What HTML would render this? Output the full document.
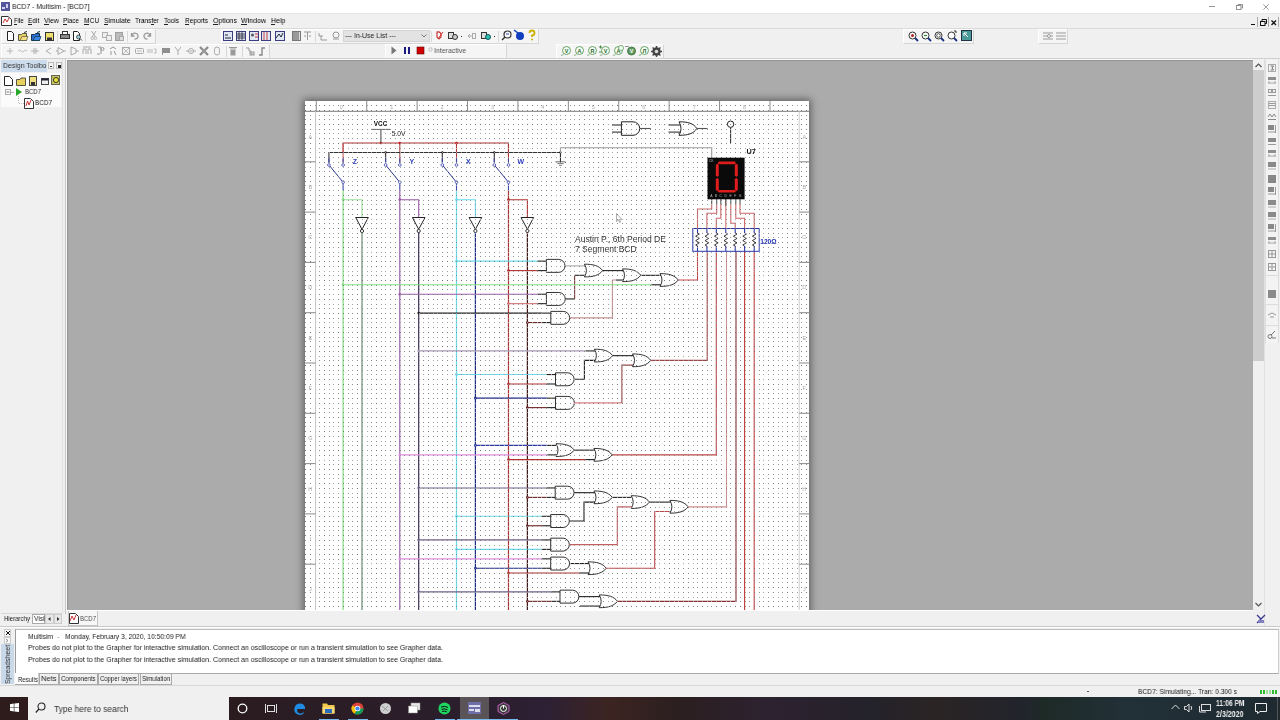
<!DOCTYPE html>
<html><head><meta charset="utf-8"><style>
*{margin:0;padding:0;box-sizing:border-box}
html,body{width:1280px;height:720px;overflow:hidden;background:#f0f0f0;font-family:"Liberation Sans",sans-serif;font-size:8px;color:#000}
.a{position:absolute}
.t{white-space:nowrap;transform-origin:0 50%;will-change:transform}
svg.a{overflow:visible}
</style></head><body>
<div class="a" style="left:0px;top:0px;width:1280px;height:13px;background:#fff"></div>
<div class="a" style="left:0px;top:13px;width:1280px;height:1px;background:#e6e6e6"></div>
<svg class="a" style="left:1px;top:2px;" width="9" height="9" viewBox="0 0 9 9"><rect x="0" y="0" width="9" height="9" fill="#55559a"/><rect x="1" y="5" width="3" height="2" fill="#d0d0f0"/><rect x="5" y="2" width="2" height="4" fill="#d0d0f0"/></svg>
<div class="a t" style="left:12px;top:1.20px;font-size:8px;line-height:12px;color:#1a1a1a;font-weight:normal;transform:scaleX(0.8536);">BCD7 - Multisim - [BCD7]</div>
<div class="a" style="left:1209px;top:6px;width:6px;height:1px;background:#999"></div>
<svg class="a" style="left:1236px;top:4px;" width="7" height="6" viewBox="0 0 7 6"><rect x="0.5" y="1.5" width="4.5" height="4" fill="none" stroke="#888" stroke-width="0.9"/><path d="M2 1.5V0.5H6.5V4H5" fill="none" stroke="#888" stroke-width="0.9"/></svg>
<svg class="a" style="left:1262.5px;top:3.5px;" width="6" height="6" viewBox="0 0 6 6"><path d="M0.3 0.3L5.7 5.7M5.7 0.3L0.3 5.7" stroke="#8a8a8a" stroke-width="0.8"/></svg>
<div class="a" style="left:0px;top:14px;width:1280px;height:14px;background:#f0f0f0"></div>
<div class="a" style="left:0px;top:28px;width:1280px;height:1px;background:#dadada"></div>
<svg class="a" style="left:1px;top:16px;" width="11" height="10" viewBox="0 0 11 10"><path d="M0.5 0.5H7L10.5 3.5V9.5H0.5Z" fill="#fff" stroke="#333"/><path d="M2 7L4 3L6 6L8 2" stroke="#c33" fill="none"/></svg>
<div class="a t" style="left:13.5px;top:15.30px;font-size:8px;line-height:12px;color:#000;font-weight:normal;transform:scaleX(0.7370);">File</div>
<div class="a t" style="left:28px;top:15.30px;font-size:8px;line-height:12px;color:#000;font-weight:normal;transform:scaleX(0.8270);">Edit</div>
<div class="a t" style="left:44px;top:15.30px;font-size:8px;line-height:12px;color:#000;font-weight:normal;transform:scaleX(0.8578);">View</div>
<div class="a t" style="left:63px;top:15.30px;font-size:8px;line-height:12px;color:#000;font-weight:normal;transform:scaleX(0.7996);">Place</div>
<div class="a t" style="left:83.75px;top:15.30px;font-size:8px;line-height:12px;color:#000;font-weight:normal;transform:scaleX(0.8370);">MCU</div>
<div class="a t" style="left:103.5px;top:15.30px;font-size:8px;line-height:12px;color:#000;font-weight:normal;transform:scaleX(0.8514);">Simulate</div>
<div class="a t" style="left:135px;top:15.30px;font-size:8px;line-height:12px;color:#000;font-weight:normal;transform:scaleX(0.8055);">Transfer</div>
<div class="a t" style="left:164px;top:15.30px;font-size:8px;line-height:12px;color:#000;font-weight:normal;transform:scaleX(0.8032);">Tools</div>
<div class="a t" style="left:184.5px;top:15.30px;font-size:8px;line-height:12px;color:#000;font-weight:normal;transform:scaleX(0.8211);">Reports</div>
<div class="a t" style="left:212.5px;top:15.30px;font-size:8px;line-height:12px;color:#000;font-weight:normal;transform:scaleX(0.8706);">Options</div>
<div class="a t" style="left:241px;top:15.30px;font-size:8px;line-height:12px;color:#000;font-weight:normal;transform:scaleX(0.8787);">Window</div>
<div class="a t" style="left:270.5px;top:15.30px;font-size:8px;line-height:12px;color:#000;font-weight:normal;transform:scaleX(0.8813);">Help</div>
<div class="a" style="left:13.7px;top:24.0px;width:3.5px;height:0.9px;background:#222"></div>
<div class="a" style="left:28.2px;top:24.0px;width:3.8000000000000007px;height:0.9px;background:#222"></div>
<div class="a" style="left:44.2px;top:24.0px;width:4.799999999999997px;height:0.9px;background:#222"></div>
<div class="a" style="left:63.2px;top:24.0px;width:4.299999999999997px;height:0.9px;background:#222"></div>
<div class="a" style="left:83.9px;top:24.0px;width:5.599999999999994px;height:0.9px;background:#222"></div>
<div class="a" style="left:103.7px;top:24.0px;width:3.8999999999999915px;height:0.9px;background:#222"></div>
<div class="a" style="left:151px;top:24.0px;width:2.8000000000000114px;height:0.9px;background:#222"></div>
<div class="a" style="left:164.3px;top:24.0px;width:3.8999999999999773px;height:0.9px;background:#222"></div>
<div class="a" style="left:184.6px;top:24.0px;width:4.400000000000006px;height:0.9px;background:#222"></div>
<div class="a" style="left:212.6px;top:24.0px;width:5.0px;height:0.9px;background:#222"></div>
<div class="a" style="left:241.1px;top:24.0px;width:6.400000000000006px;height:0.9px;background:#222"></div>
<div class="a" style="left:270.6px;top:24.0px;width:4.599999999999966px;height:0.9px;background:#222"></div>
<div class="a" style="left:1251px;top:24px;width:4px;height:1.2px;background:#111"></div>
<svg class="a" style="left:1259.5px;top:19px;" width="8" height="7" viewBox="0 0 8 7"><rect x="0.5" y="2.5" width="4.5" height="4" fill="none" stroke="#111"/><path d="M2 2.5V0.5H6.5V4.5H5" fill="none" stroke="#111"/></svg>
<svg class="a" style="left:1271px;top:20px;" width="5.5" height="5.5" viewBox="0 0 5.5 5.5"><path d="M0.5 0.5L5 5M5 0.5L0.5 5" stroke="#111" stroke-width="1.3"/></svg>
<div class="a" style="left:1257px;top:17px;width:1px;height:10px;background:#aaa"></div>
<div class="a" style="left:1268px;top:17px;width:1px;height:10px;background:#aaa"></div>
<div class="a" style="left:1278px;top:17px;width:1px;height:10px;background:#aaa"></div>
<div class="a" style="left:0px;top:29px;width:1280px;height:31px;background:#f0f0f0"></div>
<div class="a" style="left:1px;top:29px;width:155px;height:15px;background:#f5f5f5;border-right:1px solid #d6d6d6;border-bottom:1px solid #d6d6d6;border-left:1px solid #fff;border-top:1px solid #fff"></div>
<div class="a" style="left:221px;top:29px;width:318px;height:15px;background:#f5f5f5;border-right:1px solid #d6d6d6;border-bottom:1px solid #d6d6d6;border-left:1px solid #fff;border-top:1px solid #fff"></div>
<div class="a" style="left:903px;top:29px;width:71px;height:15px;background:#f5f5f5;border-right:1px solid #d6d6d6;border-bottom:1px solid #d6d6d6;border-left:1px solid #fff;border-top:1px solid #fff"></div>
<div class="a" style="left:1038px;top:29px;width:30px;height:15px;background:#f5f5f5;border-right:1px solid #d6d6d6;border-bottom:1px solid #d6d6d6;border-left:1px solid #fff;border-top:1px solid #fff"></div>
<div class="a" style="left:1px;top:44px;width:269px;height:15px;background:#f5f5f5;border-right:1px solid #d6d6d6;border-bottom:1px solid #d6d6d6;border-left:1px solid #fff;border-top:1px solid #fff"></div>
<div class="a" style="left:385px;top:44px;width:122px;height:15px;background:#f5f5f5;border-right:1px solid #d6d6d6;border-bottom:1px solid #d6d6d6;border-left:1px solid #fff;border-top:1px solid #fff"></div>
<div class="a" style="left:556px;top:44px;width:108px;height:15px;background:#f5f5f5;border-right:1px solid #d6d6d6;border-bottom:1px solid #d6d6d6;border-left:1px solid #fff;border-top:1px solid #fff"></div>
<div class="a" style="left:57px;top:31px;width:1px;height:11px;background:#d8d8d8"></div>
<div class="a" style="left:85px;top:31px;width:1px;height:11px;background:#d8d8d8"></div>
<div class="a" style="left:127px;top:31px;width:1px;height:11px;background:#d8d8d8"></div>
<div class="a" style="left:315px;top:31px;width:1px;height:11px;background:#d8d8d8"></div>
<div class="a" style="left:431px;top:31px;width:1px;height:11px;background:#d8d8d8"></div>
<div class="a" style="left:498px;top:31px;width:1px;height:11px;background:#d8d8d8"></div>
<div class="a" style="left:226px;top:46px;width:1px;height:11px;background:#d8d8d8"></div>
<div class="a" style="left:242px;top:46px;width:1px;height:11px;background:#d8d8d8"></div>
<svg class="a" style="left:7px;top:31px;" width="8" height="10" viewBox="0 0 8 10"><path d="M0.5 0.5H4.5L6.5 2.5V9.5H0.5Z" fill="#fff" stroke="#222"/></svg>
<svg class="a" style="left:18px;top:31px;" width="11" height="10" viewBox="0 0 11 10"><path d="M0.5 3.5H3.5L4.5 2.5H8.5V9.5H0.5Z" fill="#e8d060" stroke="#554"/><path d="M2 9.5L4 5.5H10L8.5 9.5Z" fill="#f4e080" stroke="#554" stroke-width="0.7"/><path d="M6 1.5L9 0.5" stroke="#333"/></svg>
<svg class="a" style="left:31px;top:31px;" width="11" height="10" viewBox="0 0 11 10"><path d="M0.5 3.5H3.5L4.5 2.5H8.5V9.5H0.5Z" fill="#2a6fd0" stroke="#134"/><path d="M2 9.5L4 5.5H10L8.5 9.5Z" fill="#3a86e8" stroke="#134" stroke-width="0.7"/><path d="M6 1.5L9 0.5" stroke="#134"/></svg>
<svg class="a" style="left:45px;top:32px;" width="9" height="9" viewBox="0 0 9 9"><rect x="0.5" y="0.5" width="8" height="8" fill="#f0e070" stroke="#333"/><rect x="2" y="5.5" width="5" height="3" fill="#333"/></svg>
<svg class="a" style="left:60px;top:31px;" width="10" height="9" viewBox="0 0 10 9"><rect x="0.5" y="3.5" width="9" height="4" fill="#888" stroke="#333"/><rect x="2.5" y="0.5" width="5" height="3" fill="#fff" stroke="#333"/></svg>
<svg class="a" style="left:73px;top:31px;" width="10" height="10" viewBox="0 0 10 10"><path d="M0.5 0.5H4.5L6.5 2.5V9.5H0.5Z" fill="#fff" stroke="#222"/><circle cx="5.5" cy="6" r="2" fill="#9cd" stroke="#333" stroke-width="0.8"/><path d="M7 7.5L9 9.5" stroke="#333"/></svg>
<svg class="a" style="left:91px;top:31px;" width="6" height="9" viewBox="0 0 6 9"><path d="M0.5 0L4.5 6M5 0L1 6" stroke="#aaa"/><circle cx="1.3" cy="7.3" r="1.3" fill="none" stroke="#aaa" stroke-width="0.8"/><circle cx="4.5" cy="7.3" r="1.3" fill="none" stroke="#aaa" stroke-width="0.8"/></svg>
<svg class="a" style="left:102px;top:32px;" width="10" height="9" viewBox="0 0 10 9"><rect x="0.5" y="0.5" width="5" height="5" fill="#eee" stroke="#b0b0b0"/><rect x="4.5" y="3.5" width="5" height="5" fill="#eee" stroke="#b0b0b0"/></svg>
<svg class="a" style="left:115px;top:31px;" width="9" height="10" viewBox="0 0 9 10"><rect x="0.5" y="1.5" width="7" height="8" fill="#bbb" stroke="#a0a0a0"/><rect x="4.5" y="5.5" width="4" height="4" fill="#ddd" stroke="#aaa"/></svg>
<svg class="a" style="left:130px;top:32px;" width="8" height="8" viewBox="0 0 8 8"><path d="M1.5 1V4H4.5" fill="none" stroke="#999" stroke-width="1.3"/><path d="M2 4A3 3 0 1 1 4.5 7" fill="none" stroke="#999" stroke-width="1.3"/></svg>
<svg class="a" style="left:144px;top:32px;" width="8" height="8" viewBox="0 0 8 8"><path d="M6.5 1V4H3.5" fill="none" stroke="#999" stroke-width="1.3"/><path d="M6 4A3 3 0 1 0 3.5 7" fill="none" stroke="#999" stroke-width="1.3"/></svg>
<svg class="a" style="left:223px;top:31px;" width="10" height="10" viewBox="0 0 10 10"><rect x="0.5" y="0.5" width="9" height="9" fill="#dfe6f4" stroke="#3c3c80"/><path d="M2 7H8M2 4H5" stroke="#223" /></svg>
<svg class="a" style="left:236px;top:31px;" width="10" height="10" viewBox="0 0 10 10"><rect x="0.5" y="0.5" width="9" height="9" fill="#dfe6f4" stroke="#3c3c80"/><path d="M1 3H9M1 5H9M1 7H9M3 1V9M6 1V9" stroke="#223" stroke-width="0.8"/></svg>
<svg class="a" style="left:249px;top:31px;" width="10" height="10" viewBox="0 0 10 10"><rect x="0.5" y="0.5" width="9" height="9" fill="#dfe6f4" stroke="#3c3c80"/><circle cx="3.5" cy="4" r="1.5" fill="#555"/><path d="M6 3H9M6 6H9" stroke="#c33"/></svg>
<svg class="a" style="left:261px;top:31px;" width="10" height="10" viewBox="0 0 10 10"><rect x="0.5" y="0.5" width="9" height="9" fill="#dfe6f4" stroke="#3c3c80"/><path d="M3 1V9M6 1V9" stroke="#c44"/></svg>
<svg class="a" style="left:275px;top:31px;" width="10" height="10" viewBox="0 0 10 10"><rect x="0.5" y="0.5" width="9" height="9" fill="#dfe6f4" stroke="#3c3c80"/><path d="M1 7L4 3L6 6L8 2" stroke="#223" fill="none"/></svg>
<svg class="a" style="left:292px;top:31px;" width="9" height="10" viewBox="0 0 9 10"><rect x="0.5" y="0.5" width="8" height="9" fill="#ddd" stroke="#777"/><path d="M2 1V9M4 1V9M6 1V9" stroke="#555"/></svg>
<svg class="a" style="left:303px;top:31px;" width="9" height="10" viewBox="0 0 9 10"><path d="M1 1H8M4.5 1V9M1 5H3M6 5H8" stroke="#999"/></svg>
<svg class="a" style="left:318px;top:32px;" width="10" height="9" viewBox="0 0 10 9"><path d="M1 1V4H5M3 4V8H9" fill="none" stroke="#999"/></svg>
<svg class="a" style="left:331px;top:31px;" width="10" height="10" viewBox="0 0 10 10"><circle cx="5" cy="4" r="3" fill="none" stroke="#999"/><path d="M2 8H8" stroke="#999"/></svg>
<div class="a" style="left:343px;top:30px;width:87px;height:12px;background:#e3e3e3;border:1px solid #d4d4d4"></div>
<div class="a t" style="left:345px;top:30.00px;font-size:8px;line-height:12px;color:#222;font-weight:normal;transform:scaleX(0.8694);">--- In-Use List ---</div>
<svg class="a" style="left:421px;top:34px;" width="6" height="4" viewBox="0 0 6 4"><path d="M0.5 0.5L3 3L5.5 0.5" fill="none" stroke="#777"/></svg>
<svg class="a" style="left:434px;top:31px;" width="10" height="10" viewBox="0 0 10 10"><path d="M3 1A3 3 0 0 1 7 3V6L5 8L3 6Z" fill="none" stroke="#c33" stroke-width="1.2"/><path d="M4 8L9 1" stroke="#c33"/></svg>
<svg class="a" style="left:448px;top:31px;" width="10" height="10" viewBox="0 0 10 10"><rect x="0.5" y="1.5" width="5" height="6" fill="#ddd" stroke="#333"/><circle cx="7" cy="6" r="2.5" fill="#ccc" stroke="#333"/></svg>
<div class="a" style="left:461px;top:36px;width:1px;height:1px;background:#333"></div>
<svg class="a" style="left:467px;top:32px;" width="9" height="8" viewBox="0 0 9 8"><path d="M1 4H5M3 2L1 4L3 6" stroke="#aaa" fill="none"/><rect x="5.5" y="1.5" width="3" height="5" fill="none" stroke="#aaa"/></svg>
<svg class="a" style="left:481px;top:31px;" width="10" height="10" viewBox="0 0 10 10"><rect x="0.5" y="1.5" width="5" height="6" fill="#ddd" stroke="#333"/><circle cx="7" cy="6" r="2.5" fill="#2ac0b0" stroke="#155"/></svg>
<div class="a" style="left:494px;top:36px;width:1px;height:1px;background:#333"></div>
<svg class="a" style="left:501px;top:30px;" width="11" height="11" viewBox="0 0 11 11"><circle cx="6.5" cy="4.5" r="3.5" fill="#fff" stroke="#333" stroke-width="1.2"/><path d="M4 7L1 10" stroke="#333" stroke-width="1.5"/><path d="M5 4H8" stroke="#24a"/></svg>
<svg class="a" style="left:514px;top:30px;" width="11" height="11" viewBox="0 0 11 11"><circle cx="6" cy="6" r="4" fill="#1040c0"/><path d="M0 0L4 3" stroke="#1040c0" stroke-width="1.5"/></svg>
<svg class="a" style="left:528px;top:30px;" width="8" height="11" viewBox="0 0 8 11"><path d="M1.5 3A2.5 2.5 0 1 1 4 5.5V7" fill="none" stroke="#c9b000" stroke-width="1.8"/><circle cx="4" cy="9.5" r="1" fill="#c9b000"/></svg>
<svg class="a" style="left:908px;top:31px;" width="11" height="11" viewBox="0 0 11 11"><circle cx="4.5" cy="4.5" r="3.5" fill="#fff" stroke="#333"/><path d="M7 7L10 10" stroke="#1a2f80" stroke-width="1.8"/><circle cx="4.5" cy="4.5" r="1.5" fill="#b02020"/></svg>
<svg class="a" style="left:921px;top:31px;" width="11" height="11" viewBox="0 0 11 11"><circle cx="4.5" cy="4.5" r="3.5" fill="#fff" stroke="#333"/><path d="M7 7L10 10" stroke="#1a2f80" stroke-width="1.8"/><path d="M3 4.5H6" stroke="#2a8a2a" stroke-width="1.2"/></svg>
<svg class="a" style="left:934px;top:31px;" width="11" height="11" viewBox="0 0 11 11"><circle cx="4.5" cy="4.5" r="3.5" fill="#fff" stroke="#333"/><path d="M7 7L10 10" stroke="#1a2f80" stroke-width="1.8"/><circle cx="4.5" cy="4.5" r="1.8" fill="none" stroke="#555"/></svg>
<svg class="a" style="left:947px;top:31px;" width="11" height="11" viewBox="0 0 11 11"><circle cx="4.5" cy="4.5" r="3.5" fill="#fff" stroke="#333"/><path d="M7 7L10 10" stroke="#1a2f80" stroke-width="1.8"/><path d="M7 0L9 0L9 2" stroke="#333" fill="none"/></svg>
<svg class="a" style="left:961px;top:30px;" width="11" height="11" viewBox="0 0 11 11"><rect x="0.5" y="0.5" width="10" height="10" fill="#4a9a9a" stroke="#234"/><path d="M3 3L7 7M3 3H6M3 3V6" stroke="#fff" fill="none"/></svg>
<svg class="a" style="left:1043px;top:31px;" width="10" height="10" viewBox="0 0 10 10"><path d="M0 2H10M0 5H10M0 8H10" stroke="#999"/><circle cx="6" cy="5" r="1.5" fill="#fff" stroke="#999"/></svg>
<svg class="a" style="left:1056px;top:31px;" width="10" height="10" viewBox="0 0 10 10"><path d="M0 2H10M0 5H10M0 8H10" stroke="#999"/></svg>
<svg class="a" style="left:5px;top:46px;" width="10" height="10" viewBox="0 0 10 10"><path d="M5 2V8M2 5H8" stroke="#b8b8b8"/></svg>
<svg class="a" style="left:17px;top:46px;" width="10" height="10" viewBox="0 0 10 10"><path d="M1 5Q2.5 3 4 5T7 5T10 5" stroke="#bbb" fill="none"/></svg>
<svg class="a" style="left:30px;top:46px;" width="10" height="10" viewBox="0 0 10 10"><path d="M1 5H9M4 2V8M6 2V8" stroke="#b0b0b0"/></svg>
<svg class="a" style="left:43px;top:46px;" width="10" height="10" viewBox="0 0 10 10"><path d="M8 2L3 5L8 8" stroke="#b0b0b0" fill="none"/></svg>
<svg class="a" style="left:56px;top:46px;" width="10" height="10" viewBox="0 0 10 10"><path d="M2 1.5L8 5L2 8.5Z" fill="none" stroke="#aaa"/><path d="M0 5H2M8 5H10" stroke="#aaa"/></svg>
<svg class="a" style="left:69px;top:46px;" width="10" height="10" viewBox="0 0 10 10"><path d="M2 1L7 3V7L2 9Z" fill="none" stroke="#aaa"/><path d="M7 5H10" stroke="#aaa"/></svg>
<svg class="a" style="left:82px;top:46px;" width="10" height="10" viewBox="0 0 10 10"><path d="M1 8V3H4V8M6 8V3H9V8M1 1H9" stroke="#aaa" fill="none"/></svg>
<svg class="a" style="left:95px;top:46px;" width="10" height="10" viewBox="0 0 10 10"><path d="M3 1H6V8M2 8H5" stroke="#999" fill="none"/><circle cx="7.5" cy="3" r="1.5" fill="none" stroke="#999"/></svg>
<svg class="a" style="left:108px;top:46px;" width="10" height="10" viewBox="0 0 10 10"><path d="M2 3L5 1L8 3M3 5V9M6 5L8 9" stroke="#999" fill="none"/></svg>
<svg class="a" style="left:121px;top:46px;" width="10" height="10" viewBox="0 0 10 10"><rect x="1.5" y="1.5" width="7" height="7" fill="none" stroke="#aaa"/><path d="M2 2L8 8M8 2L2 8" stroke="#bbb"/></svg>
<svg class="a" style="left:134px;top:46px;" width="10" height="10" viewBox="0 0 10 10"><rect x="1.5" y="2.5" width="8" height="5" rx="1" fill="none" stroke="#aaa"/><path d="M3 5H8" stroke="#bbb"/></svg>
<svg class="a" style="left:147px;top:46px;" width="10" height="10" viewBox="0 0 10 10"><path d="M1 3V7M3 3V7M5 3V7M7 3H9V7H7" stroke="#bbb" fill="none"/></svg>
<svg class="a" style="left:161px;top:46px;" width="10" height="10" viewBox="0 0 10 10"><rect x="1" y="2" width="8" height="5" fill="#8f8f8f"/><path d="M1.5 7V9" stroke="#999"/></svg>
<svg class="a" style="left:173px;top:46px;" width="10" height="10" viewBox="0 0 10 10"><path d="M2 1L5 5L8 1M5 5V9" stroke="#aaa" fill="none"/></svg>
<svg class="a" style="left:186px;top:46px;" width="10" height="10" viewBox="0 0 10 10"><circle cx="5" cy="5" r="2.5" fill="none" stroke="#aaa"/><path d="M0 5H2.5M7.5 5H10M3.5 5H6.5" stroke="#aaa"/></svg>
<svg class="a" style="left:199px;top:46px;" width="10" height="10" viewBox="0 0 10 10"><path d="M1 1L9 9M9 1L1 9" stroke="#8a8a8a" stroke-width="2.2"/><rect x="3" y="3" width="4" height="4" fill="#999"/></svg>
<svg class="a" style="left:212px;top:46px;" width="10" height="10" viewBox="0 0 10 10"><rect x="2.5" y="1" width="5" height="8" rx="2.5" fill="none" stroke="#aaa"/></svg>
<svg class="a" style="left:228px;top:46px;" width="10" height="10" viewBox="0 0 10 10"><path d="M1 1.5H9M2 3H8" stroke="#999"/><rect x="2.5" y="4" width="5" height="5.5" fill="#9a9a9a"/></svg>
<svg class="a" style="left:245px;top:46px;" width="10" height="10" viewBox="0 0 10 10"><path d="M1 2H4V5H6M6 5V8H9" stroke="#999" fill="none"/><rect x="5" y="6" width="4" height="3" fill="none" stroke="#999"/></svg>
<svg class="a" style="left:257px;top:46px;" width="10" height="10" viewBox="0 0 10 10"><path d="M2 9H5V2H8" stroke="#888" stroke-width="1.4" fill="none"/></svg>
<svg class="a" style="left:391px;top:46px;" width="6" height="9" viewBox="0 0 6 9"><path d="M0.5 0.5L5.5 4.5L0.5 8.5Z" fill="#777"/></svg>
<svg class="a" style="left:404px;top:47px;" width="6" height="7" viewBox="0 0 6 7"><rect x="0" y="0" width="2" height="7" fill="#1a1a80"/><rect x="4" y="0" width="2" height="7" fill="#1a1a80"/></svg>
<svg class="a" style="left:417px;top:47px;" width="7" height="7" viewBox="0 0 7 7"><rect x="0" y="0" width="7" height="7" fill="#d00000" stroke="#600" stroke-width="0.6"/></svg>
<svg class="a" style="left:428px;top:47px;" width="5" height="5" viewBox="0 0 5 5"><circle cx="2.5" cy="2.5" r="1.7" fill="none" stroke="#bbb"/></svg>
<div class="a t" style="left:433.5px;top:44.80px;font-size:8px;line-height:12px;color:#555;font-weight:normal;transform:scaleX(0.8698);">Interactive</div>
<svg class="a" style="left:560px;top:45px;" width="12" height="12" viewBox="0 0 12 12"><path d="M1 10.5L3.5 9.5" stroke="#9aba9a" stroke-width="1.2"/><circle cx="6.5" cy="5.5" r="4" fill="#f4fff4" stroke="#5c9a5c" stroke-width="0.9"/><text x="6.5" y="7.7" font-size="5.5" text-anchor="middle" fill="#2f5f2f" font-family="Liberation Sans" font-weight="bold">V</text></svg>
<svg class="a" style="left:573px;top:45px;" width="12" height="12" viewBox="0 0 12 12"><path d="M1 10.5L3.5 9.5" stroke="#9aba9a" stroke-width="1.2"/><circle cx="6.5" cy="5.5" r="4" fill="#f4fff4" stroke="#5c9a5c" stroke-width="0.9"/><text x="6.5" y="7.7" font-size="5.5" text-anchor="middle" fill="#2f5f2f" font-family="Liberation Sans" font-weight="bold">A</text></svg>
<svg class="a" style="left:586px;top:45px;" width="12" height="12" viewBox="0 0 12 12"><path d="M1 10.5L3.5 9.5" stroke="#9aba9a" stroke-width="1.2"/><circle cx="6.5" cy="5.5" r="4" fill="#f4fff4" stroke="#5c9a5c" stroke-width="0.9"/><text x="6.5" y="7.7" font-size="5.5" text-anchor="middle" fill="#2f5f2f" font-family="Liberation Sans" font-weight="bold">R</text></svg>
<svg class="a" style="left:599px;top:45px;" width="12" height="12" viewBox="0 0 12 12"><path d="M1 10.5L3.5 9.5" stroke="#9aba9a" stroke-width="1.2"/><circle cx="6.5" cy="5.5" r="4" fill="#f4fff4" stroke="#5c9a5c" stroke-width="0.9"/><text x="6.5" y="7.7" font-size="5.5" text-anchor="middle" fill="#2f5f2f" font-family="Liberation Sans" font-weight="bold">V</text><path d="M0 2H3M1.5 0.5V3.5M0 7H3" stroke="#4a8a4a"/></svg>
<svg class="a" style="left:612px;top:45px;" width="12" height="12" viewBox="0 0 12 12"><path d="M1 10.5L3.5 9.5" stroke="#9aba9a" stroke-width="1.2"/><circle cx="6.5" cy="5.5" r="4" fill="#f4fff4" stroke="#5c9a5c" stroke-width="0.9"/><text x="6.5" y="7.7" font-size="5.5" text-anchor="middle" fill="#2f5f2f" font-family="Liberation Sans" font-weight="bold">A</text><circle cx="9" cy="3" r="2.5" fill="#f4fff4" stroke="#5c9a5c" stroke-width="0.8"/></svg>
<svg class="a" style="left:625px;top:45px;" width="12" height="12" viewBox="0 0 12 12"><path d="M0 1.5H4" stroke="#9a9a9a"/><circle cx="6.5" cy="6" r="4" fill="#5f9a5f" stroke="#3c6c3c" stroke-width="0.8"/><text x="6.5" y="8.2" font-size="5.5" text-anchor="middle" fill="#fff" font-family="Liberation Sans" font-weight="bold">V</text></svg>
<svg class="a" style="left:638px;top:45px;" width="12" height="12" viewBox="0 0 12 12"><path d="M1 10.5L3.5 9.5" stroke="#9aba9a" stroke-width="1.2"/><circle cx="6.5" cy="5.5" r="4" fill="#f4fff4" stroke="#5c9a5c" stroke-width="0.9"/><text x="6.5" y="7.7" font-size="5.5" text-anchor="middle" fill="#2f5f2f" font-family="Liberation Sans" font-weight="bold">Л</text></svg>
<svg class="a" style="left:651px;top:46px;" width="11" height="11" viewBox="0 0 11 11"><circle cx="5.5" cy="5.5" r="4.2" fill="#444"/><path d="M5.5 0V11M0 5.5H11M1.6 1.6L9.4 9.4M9.4 1.6L1.6 9.4" stroke="#444" stroke-width="1.4"/><circle cx="5.5" cy="5.5" r="1.8" fill="#ddd"/></svg>
<div class="a" style="left:0px;top:59px;width:62px;height:568px;background:#f0f0f0"></div>
<div class="a" style="left:62px;top:59px;width:1px;height:555px;background:#e2e2e2"></div>
<div class="a" style="left:1px;top:60px;width:46px;height:12px;background:#cddcec"></div>
<div class="a t" style="left:2.5px;top:59.80px;font-size:8px;line-height:12px;color:#333;font-weight:normal;transform:scaleX(0.8605);">Design Toolbo</div>
<div class="a" style="left:48px;top:62px;width:6px;height:7px;background:#f4f4f4;border:1px solid #bbb"></div>
<div class="a" style="left:50px;top:66px;width:2px;height:1px;background:#333"></div>
<div class="a" style="left:55.5px;top:62px;width:6.5px;height:7px;background:#f4f4f4;border:1px solid #bbb"></div>
<div class="a" style="left:57.5px;top:64.5px;width:3px;height:3px;background:#222"></div>
<div class="a" style="left:1px;top:73px;width:60px;height:34px;background:#fbfbfb"></div>
<svg class="a" style="left:4px;top:76px;" width="9" height="10" viewBox="0 0 9 10"><path d="M0.5 0.5H5.5L8.5 3.5V9.5H0.5Z" fill="#fff" stroke="#222"/></svg>
<svg class="a" style="left:16px;top:76px;" width="10" height="10" viewBox="0 0 10 10"><path d="M0.5 3.5H4L5 2H9.5V9.5H0.5Z" fill="#e8d060" stroke="#554"/></svg>
<svg class="a" style="left:29px;top:76px;" width="8" height="10" viewBox="0 0 8 10"><rect x="0.5" y="0.5" width="7" height="9" fill="#f0e080" stroke="#444"/><rect x="2" y="6" width="4" height="3" fill="#333"/></svg>
<svg class="a" style="left:41px;top:77px;" width="8" height="8" viewBox="0 0 8 8"><rect x="0.5" y="1.5" width="7" height="6" fill="#eee" stroke="#444"/><rect x="0.5" y="1.5" width="7" height="2" fill="#223"/></svg>
<svg class="a" style="left:51px;top:75px;" width="9" height="10" viewBox="0 0 9 10"><rect x="0.5" y="0.5" width="8" height="9" fill="#c8c060" stroke="#665"/><circle cx="5" cy="5" r="2.5" fill="#ee3" stroke="#333"/></svg>
<svg class="a" style="left:5px;top:89px;" width="6" height="6" viewBox="0 0 6 6"><rect x="0.5" y="0.5" width="5" height="5" fill="#fff" stroke="#aaa"/><path d="M1.5 3H4.5" stroke="#777"/></svg>
<div class="a" style="left:11px;top:92px;width:3px;height:1px;background:#bbb"></div>
<svg class="a" style="left:16px;top:88px;" width="6" height="8" viewBox="0 0 6 8"><path d="M0 0L6 4L0 8Z" fill="#2aa52a"/></svg>
<div class="a t" style="left:25px;top:86.00px;font-size:8px;line-height:12px;color:#333;font-weight:normal;transform:scaleX(0.7498);">BCD7</div>
<svg class="a" style="left:18px;top:96px;" width="6" height="8" viewBox="0 0 6 8"><path d="M0.5 0V7.5H6" fill="none" stroke="#bbb" stroke-dasharray="1 1"/></svg>
<svg class="a" style="left:24px;top:98px;" width="10" height="11" viewBox="0 0 10 11"><path d="M0.5 0.5H6.5L9.5 3.5V10.5H0.5Z" fill="#fff" stroke="#333"/><path d="M2 8L3.5 3L5 7L7 2" stroke="#c33" fill="none"/></svg>
<div class="a t" style="left:35px;top:97.00px;font-size:8px;line-height:12px;color:#222;font-weight:normal;transform:scaleX(0.7966);">BCD7</div>
<div class="a" style="left:1px;top:613px;width:61px;height:1px;background:#d8d8d8"></div>
<div class="a t" style="left:4px;top:613.30px;font-size:8px;line-height:12px;color:#222;font-weight:normal;transform:scaleX(0.7596);">Hierarchy</div>
<div class="a" style="left:32px;top:614px;width:13px;height:10px;background:#fff;border:1px solid #aaa"></div>
<div class="a t" style="left:33.5px;top:613.00px;font-size:8px;line-height:12px;color:#222;font-weight:normal;transform:scaleX(0.8238);">Visi</div>
<div class="a" style="left:45px;top:614px;width:9px;height:10px;background:#e8e8e8;border:1px solid #ccc"></div>
<div class="a" style="left:54px;top:614px;width:8px;height:10px;background:#e8e8e8;border:1px solid #ccc"></div>
<svg class="a" style="left:48px;top:617px;" width="3" height="4" viewBox="0 0 3 4"><path d="M2.5 0L0 2L2.5 4Z" fill="#333"/></svg>
<svg class="a" style="left:56.5px;top:617px;" width="3" height="4" viewBox="0 0 3 4"><path d="M0 0L2.5 2L0 4Z" fill="#333"/></svg>
<div class="a" style="left:63px;top:58px;width:3px;height:556px;background:#f0f0f0"></div>
<div class="a" style="left:65px;top:58px;width:1px;height:556px;background:#c8c8c8"></div>
<div class="a" style="left:0px;top:58px;width:1280px;height:1px;background:#cfcfcf"></div>
<div class="a" style="left:66px;top:59px;width:1187px;height:551px;background:#fafafa"></div>
<div class="a" style="left:67px;top:60px;width:1186px;height:550px;background:#ababab;border-left:1px solid #959595;border-top:1px solid #959595"></div>
<div class="a" style="left:67px;top:60px;width:1186px;height:550px;overflow:hidden">
<div class="a" style="left:238px;top:41px;width:504px;height:560px;background:#fff;box-shadow:0 0 7px 2px rgba(40,40,40,0.55)"></div>
<svg class="a" style="left:-67px;top:-60px;will-change:transform" width="1280" height="720" viewBox="0 0 1280 720"><defs><pattern id="gp" x="305" y="100" width="189" height="189" patternUnits="userSpaceOnUse"><path d="M0 5h1v1h-1zM0 10h1v1h-1zM0 24h1v1h-1zM0 43h1v1h-1zM0 57h1v1h-1zM0 76h1v1h-1zM0 95h1v1h-1zM0 109h1v1h-1zM0 128h1v1h-1zM0 142h1v1h-1zM0 147h1v1h-1zM0 161h1v1h-1zM0 180h1v1h-1zM5 24h1v1h-1zM5 43h1v1h-1zM5 76h1v1h-1zM5 109h1v1h-1zM5 128h1v1h-1zM5 161h1v1h-1zM5 180h1v1h-1zM19 5h1v1h-1zM19 10h1v1h-1zM19 24h1v1h-1zM19 38h1v1h-1zM19 43h1v1h-1zM19 57h1v1h-1zM19 62h1v1h-1zM19 76h1v1h-1zM19 90h1v1h-1zM19 95h1v1h-1zM19 109h1v1h-1zM19 114h1v1h-1zM19 128h1v1h-1zM19 142h1v1h-1zM19 147h1v1h-1zM19 161h1v1h-1zM19 166h1v1h-1zM19 175h1v1h-1zM19 180h1v1h-1zM33 24h1v1h-1zM33 43h1v1h-1zM33 76h1v1h-1zM33 109h1v1h-1zM33 128h1v1h-1zM33 161h1v1h-1zM33 180h1v1h-1zM38 5h1v1h-1zM38 10h1v1h-1zM38 24h1v1h-1zM38 43h1v1h-1zM38 57h1v1h-1zM38 76h1v1h-1zM38 95h1v1h-1zM38 109h1v1h-1zM38 128h1v1h-1zM38 142h1v1h-1zM38 147h1v1h-1zM38 161h1v1h-1zM38 180h1v1h-1zM52 5h1v1h-1zM52 10h1v1h-1zM52 24h1v1h-1zM52 43h1v1h-1zM52 57h1v1h-1zM52 62h1v1h-1zM52 76h1v1h-1zM52 90h1v1h-1zM52 95h1v1h-1zM52 109h1v1h-1zM52 128h1v1h-1zM52 142h1v1h-1zM52 147h1v1h-1zM52 161h1v1h-1zM52 180h1v1h-1zM57 24h1v1h-1zM57 76h1v1h-1zM57 128h1v1h-1zM57 161h1v1h-1zM57 180h1v1h-1zM71 5h1v1h-1zM71 10h1v1h-1zM71 24h1v1h-1zM71 38h1v1h-1zM71 43h1v1h-1zM71 57h1v1h-1zM71 62h1v1h-1zM71 76h1v1h-1zM71 90h1v1h-1zM71 95h1v1h-1zM71 109h1v1h-1zM71 114h1v1h-1zM71 128h1v1h-1zM71 142h1v1h-1zM71 147h1v1h-1zM71 161h1v1h-1zM71 166h1v1h-1zM71 175h1v1h-1zM71 180h1v1h-1zM85 24h1v1h-1zM85 43h1v1h-1zM85 57h1v1h-1zM85 76h1v1h-1zM85 95h1v1h-1zM85 109h1v1h-1zM85 128h1v1h-1zM85 161h1v1h-1zM85 180h1v1h-1zM90 5h1v1h-1zM90 24h1v1h-1zM90 43h1v1h-1zM90 57h1v1h-1zM90 76h1v1h-1zM90 95h1v1h-1zM90 109h1v1h-1zM90 128h1v1h-1zM90 147h1v1h-1zM90 161h1v1h-1zM90 180h1v1h-1zM104 5h1v1h-1zM104 10h1v1h-1zM104 24h1v1h-1zM104 38h1v1h-1zM104 43h1v1h-1zM104 57h1v1h-1zM104 62h1v1h-1zM104 76h1v1h-1zM104 90h1v1h-1zM104 95h1v1h-1zM104 109h1v1h-1zM104 114h1v1h-1zM104 128h1v1h-1zM104 142h1v1h-1zM104 147h1v1h-1zM104 161h1v1h-1zM104 180h1v1h-1zM109 24h1v1h-1zM109 76h1v1h-1zM109 128h1v1h-1zM118 24h1v1h-1zM118 76h1v1h-1zM118 128h1v1h-1zM123 5h1v1h-1zM123 10h1v1h-1zM123 24h1v1h-1zM123 38h1v1h-1zM123 43h1v1h-1zM123 57h1v1h-1zM123 62h1v1h-1zM123 76h1v1h-1zM123 90h1v1h-1zM123 95h1v1h-1zM123 109h1v1h-1zM123 114h1v1h-1zM123 128h1v1h-1zM123 142h1v1h-1zM123 147h1v1h-1zM123 161h1v1h-1zM123 180h1v1h-1zM137 5h1v1h-1zM137 24h1v1h-1zM137 43h1v1h-1zM137 57h1v1h-1zM137 76h1v1h-1zM137 95h1v1h-1zM137 109h1v1h-1zM137 128h1v1h-1zM137 147h1v1h-1zM137 161h1v1h-1zM137 180h1v1h-1zM142 24h1v1h-1zM142 43h1v1h-1zM142 57h1v1h-1zM142 76h1v1h-1zM142 95h1v1h-1zM142 109h1v1h-1zM142 128h1v1h-1zM142 161h1v1h-1zM142 180h1v1h-1zM156 5h1v1h-1zM156 10h1v1h-1zM156 24h1v1h-1zM156 38h1v1h-1zM156 43h1v1h-1zM156 57h1v1h-1zM156 62h1v1h-1zM156 76h1v1h-1zM156 90h1v1h-1zM156 95h1v1h-1zM156 109h1v1h-1zM156 114h1v1h-1zM156 128h1v1h-1zM156 142h1v1h-1zM156 147h1v1h-1zM156 161h1v1h-1zM156 166h1v1h-1zM156 175h1v1h-1zM156 180h1v1h-1zM170 24h1v1h-1zM170 76h1v1h-1zM170 128h1v1h-1zM170 161h1v1h-1zM170 180h1v1h-1zM175 5h1v1h-1zM175 10h1v1h-1zM175 24h1v1h-1zM175 43h1v1h-1zM175 57h1v1h-1zM175 62h1v1h-1zM175 76h1v1h-1zM175 90h1v1h-1zM175 95h1v1h-1zM175 109h1v1h-1zM175 128h1v1h-1zM175 142h1v1h-1zM175 147h1v1h-1zM175 161h1v1h-1zM175 180h1v1h-1z" fill="#747474"/><path d="M0 0h1v1h-1zM0 15h1v1h-1zM0 19h1v1h-1zM0 29h1v1h-1zM0 38h1v1h-1zM0 48h1v1h-1zM0 52h1v1h-1zM0 62h1v1h-1zM0 71h1v1h-1zM0 81h1v1h-1zM0 90h1v1h-1zM0 100h1v1h-1zM0 104h1v1h-1zM0 114h1v1h-1zM0 123h1v1h-1zM0 133h1v1h-1zM0 137h1v1h-1zM0 152h1v1h-1zM0 156h1v1h-1zM0 166h1v1h-1zM0 175h1v1h-1zM0 185h1v1h-1zM5 5h1v1h-1zM5 10h1v1h-1zM5 19h1v1h-1zM5 29h1v1h-1zM5 38h1v1h-1zM5 48h1v1h-1zM5 52h1v1h-1zM5 57h1v1h-1zM5 62h1v1h-1zM5 71h1v1h-1zM5 81h1v1h-1zM5 90h1v1h-1zM5 95h1v1h-1zM5 100h1v1h-1zM5 104h1v1h-1zM5 114h1v1h-1zM5 123h1v1h-1zM5 133h1v1h-1zM5 142h1v1h-1zM5 147h1v1h-1zM5 156h1v1h-1zM5 166h1v1h-1zM5 175h1v1h-1zM5 185h1v1h-1zM10 24h1v1h-1zM10 43h1v1h-1zM10 76h1v1h-1zM10 109h1v1h-1zM10 128h1v1h-1zM10 161h1v1h-1zM10 180h1v1h-1zM14 5h1v1h-1zM14 10h1v1h-1zM14 19h1v1h-1zM14 24h1v1h-1zM14 29h1v1h-1zM14 38h1v1h-1zM14 43h1v1h-1zM14 57h1v1h-1zM14 62h1v1h-1zM14 71h1v1h-1zM14 76h1v1h-1zM14 81h1v1h-1zM14 90h1v1h-1zM14 95h1v1h-1zM14 109h1v1h-1zM14 114h1v1h-1zM14 123h1v1h-1zM14 128h1v1h-1zM14 133h1v1h-1zM14 142h1v1h-1zM14 147h1v1h-1zM14 161h1v1h-1zM14 166h1v1h-1zM14 175h1v1h-1zM14 180h1v1h-1zM19 0h1v1h-1zM19 15h1v1h-1zM19 19h1v1h-1zM19 29h1v1h-1zM19 33h1v1h-1zM19 48h1v1h-1zM19 52h1v1h-1zM19 67h1v1h-1zM19 71h1v1h-1zM19 81h1v1h-1zM19 85h1v1h-1zM19 100h1v1h-1zM19 104h1v1h-1zM19 119h1v1h-1zM19 123h1v1h-1zM19 133h1v1h-1zM19 137h1v1h-1zM19 152h1v1h-1zM19 156h1v1h-1zM19 185h1v1h-1zM24 5h1v1h-1zM24 10h1v1h-1zM24 19h1v1h-1zM24 24h1v1h-1zM24 29h1v1h-1zM24 38h1v1h-1zM24 43h1v1h-1zM24 57h1v1h-1zM24 62h1v1h-1zM24 71h1v1h-1zM24 76h1v1h-1zM24 81h1v1h-1zM24 90h1v1h-1zM24 95h1v1h-1zM24 109h1v1h-1zM24 114h1v1h-1zM24 123h1v1h-1zM24 128h1v1h-1zM24 133h1v1h-1zM24 142h1v1h-1zM24 147h1v1h-1zM24 161h1v1h-1zM24 166h1v1h-1zM24 175h1v1h-1zM24 180h1v1h-1zM28 24h1v1h-1zM28 43h1v1h-1zM28 76h1v1h-1zM28 109h1v1h-1zM28 128h1v1h-1zM28 161h1v1h-1zM28 180h1v1h-1zM33 5h1v1h-1zM33 10h1v1h-1zM33 19h1v1h-1zM33 29h1v1h-1zM33 38h1v1h-1zM33 48h1v1h-1zM33 52h1v1h-1zM33 57h1v1h-1zM33 62h1v1h-1zM33 71h1v1h-1zM33 81h1v1h-1zM33 90h1v1h-1zM33 95h1v1h-1zM33 100h1v1h-1zM33 104h1v1h-1zM33 114h1v1h-1zM33 123h1v1h-1zM33 133h1v1h-1zM33 142h1v1h-1zM33 147h1v1h-1zM33 156h1v1h-1zM33 166h1v1h-1zM33 175h1v1h-1zM33 185h1v1h-1zM38 0h1v1h-1zM38 15h1v1h-1zM38 19h1v1h-1zM38 29h1v1h-1zM38 38h1v1h-1zM38 48h1v1h-1zM38 52h1v1h-1zM38 62h1v1h-1zM38 71h1v1h-1zM38 81h1v1h-1zM38 90h1v1h-1zM38 100h1v1h-1zM38 104h1v1h-1zM38 114h1v1h-1zM38 123h1v1h-1zM38 133h1v1h-1zM38 137h1v1h-1zM38 152h1v1h-1zM38 156h1v1h-1zM38 166h1v1h-1zM38 175h1v1h-1zM38 185h1v1h-1zM43 5h1v1h-1zM43 10h1v1h-1zM43 24h1v1h-1zM43 38h1v1h-1zM43 43h1v1h-1zM43 57h1v1h-1zM43 62h1v1h-1zM43 76h1v1h-1zM43 90h1v1h-1zM43 95h1v1h-1zM43 109h1v1h-1zM43 114h1v1h-1zM43 128h1v1h-1zM43 142h1v1h-1zM43 147h1v1h-1zM43 161h1v1h-1zM43 180h1v1h-1zM47 5h1v1h-1zM47 10h1v1h-1zM47 24h1v1h-1zM47 38h1v1h-1zM47 43h1v1h-1zM47 57h1v1h-1zM47 62h1v1h-1zM47 76h1v1h-1zM47 90h1v1h-1zM47 95h1v1h-1zM47 109h1v1h-1zM47 114h1v1h-1zM47 128h1v1h-1zM47 142h1v1h-1zM47 147h1v1h-1zM47 161h1v1h-1zM47 166h1v1h-1zM47 175h1v1h-1zM47 180h1v1h-1zM52 0h1v1h-1zM52 15h1v1h-1zM52 19h1v1h-1zM52 29h1v1h-1zM52 38h1v1h-1zM52 48h1v1h-1zM52 52h1v1h-1zM52 67h1v1h-1zM52 71h1v1h-1zM52 81h1v1h-1zM52 85h1v1h-1zM52 100h1v1h-1zM52 104h1v1h-1zM52 114h1v1h-1zM52 123h1v1h-1zM52 133h1v1h-1zM52 137h1v1h-1zM52 152h1v1h-1zM52 156h1v1h-1zM52 166h1v1h-1zM52 175h1v1h-1zM52 185h1v1h-1zM57 5h1v1h-1zM57 10h1v1h-1zM57 19h1v1h-1zM57 29h1v1h-1zM57 38h1v1h-1zM57 43h1v1h-1zM57 48h1v1h-1zM57 52h1v1h-1zM57 57h1v1h-1zM57 62h1v1h-1zM57 71h1v1h-1zM57 81h1v1h-1zM57 90h1v1h-1zM57 95h1v1h-1zM57 100h1v1h-1zM57 104h1v1h-1zM57 109h1v1h-1zM57 114h1v1h-1zM57 123h1v1h-1zM57 133h1v1h-1zM57 142h1v1h-1zM57 147h1v1h-1zM57 156h1v1h-1zM57 166h1v1h-1zM57 175h1v1h-1zM57 185h1v1h-1zM62 24h1v1h-1zM62 76h1v1h-1zM62 128h1v1h-1zM66 5h1v1h-1zM66 10h1v1h-1zM66 19h1v1h-1zM66 24h1v1h-1zM66 29h1v1h-1zM66 38h1v1h-1zM66 43h1v1h-1zM66 57h1v1h-1zM66 62h1v1h-1zM66 71h1v1h-1zM66 76h1v1h-1zM66 81h1v1h-1zM66 90h1v1h-1zM66 95h1v1h-1zM66 109h1v1h-1zM66 114h1v1h-1zM66 123h1v1h-1zM66 128h1v1h-1zM66 133h1v1h-1zM66 142h1v1h-1zM66 147h1v1h-1zM66 156h1v1h-1zM66 161h1v1h-1zM66 166h1v1h-1zM66 175h1v1h-1zM66 180h1v1h-1zM66 185h1v1h-1zM71 0h1v1h-1zM71 15h1v1h-1zM71 19h1v1h-1zM71 29h1v1h-1zM71 33h1v1h-1zM71 48h1v1h-1zM71 52h1v1h-1zM71 67h1v1h-1zM71 71h1v1h-1zM71 81h1v1h-1zM71 85h1v1h-1zM71 100h1v1h-1zM71 104h1v1h-1zM71 119h1v1h-1zM71 123h1v1h-1zM71 133h1v1h-1zM71 137h1v1h-1zM71 152h1v1h-1zM71 156h1v1h-1zM71 185h1v1h-1zM76 5h1v1h-1zM76 10h1v1h-1zM76 24h1v1h-1zM76 29h1v1h-1zM76 38h1v1h-1zM76 43h1v1h-1zM76 57h1v1h-1zM76 62h1v1h-1zM76 71h1v1h-1zM76 76h1v1h-1zM76 81h1v1h-1zM76 90h1v1h-1zM76 95h1v1h-1zM76 109h1v1h-1zM76 114h1v1h-1zM76 123h1v1h-1zM76 128h1v1h-1zM76 142h1v1h-1zM76 147h1v1h-1zM76 161h1v1h-1zM76 166h1v1h-1zM76 175h1v1h-1zM76 180h1v1h-1zM80 5h1v1h-1zM80 24h1v1h-1zM80 43h1v1h-1zM80 57h1v1h-1zM80 76h1v1h-1zM80 95h1v1h-1zM80 109h1v1h-1zM80 128h1v1h-1zM80 147h1v1h-1zM80 161h1v1h-1zM80 180h1v1h-1zM85 0h1v1h-1zM85 5h1v1h-1zM85 10h1v1h-1zM85 19h1v1h-1zM85 29h1v1h-1zM85 38h1v1h-1zM85 48h1v1h-1zM85 52h1v1h-1zM85 62h1v1h-1zM85 71h1v1h-1zM85 81h1v1h-1zM85 90h1v1h-1zM85 100h1v1h-1zM85 104h1v1h-1zM85 114h1v1h-1zM85 123h1v1h-1zM85 133h1v1h-1zM85 142h1v1h-1zM85 147h1v1h-1zM85 152h1v1h-1zM85 156h1v1h-1zM85 166h1v1h-1zM85 175h1v1h-1zM85 185h1v1h-1zM90 0h1v1h-1zM90 10h1v1h-1zM90 15h1v1h-1zM90 19h1v1h-1zM90 29h1v1h-1zM90 38h1v1h-1zM90 48h1v1h-1zM90 52h1v1h-1zM90 62h1v1h-1zM90 71h1v1h-1zM90 81h1v1h-1zM90 90h1v1h-1zM90 100h1v1h-1zM90 104h1v1h-1zM90 114h1v1h-1zM90 123h1v1h-1zM90 133h1v1h-1zM90 137h1v1h-1zM90 142h1v1h-1zM90 152h1v1h-1zM90 156h1v1h-1zM90 166h1v1h-1zM90 175h1v1h-1zM90 185h1v1h-1zM95 5h1v1h-1zM95 10h1v1h-1zM95 24h1v1h-1zM95 43h1v1h-1zM95 57h1v1h-1zM95 76h1v1h-1zM95 95h1v1h-1zM95 109h1v1h-1zM95 128h1v1h-1zM95 142h1v1h-1zM95 147h1v1h-1zM95 161h1v1h-1zM95 180h1v1h-1zM99 5h1v1h-1zM99 10h1v1h-1zM99 24h1v1h-1zM99 29h1v1h-1zM99 38h1v1h-1zM99 43h1v1h-1zM99 57h1v1h-1zM99 62h1v1h-1zM99 76h1v1h-1zM99 90h1v1h-1zM99 95h1v1h-1zM99 109h1v1h-1zM99 114h1v1h-1zM99 123h1v1h-1zM99 128h1v1h-1zM99 142h1v1h-1zM99 147h1v1h-1zM99 161h1v1h-1zM99 166h1v1h-1zM99 175h1v1h-1zM99 180h1v1h-1zM104 0h1v1h-1zM104 15h1v1h-1zM104 19h1v1h-1zM104 29h1v1h-1zM104 48h1v1h-1zM104 52h1v1h-1zM104 67h1v1h-1zM104 71h1v1h-1zM104 81h1v1h-1zM104 85h1v1h-1zM104 100h1v1h-1zM104 104h1v1h-1zM104 123h1v1h-1zM104 133h1v1h-1zM104 137h1v1h-1zM104 152h1v1h-1zM104 156h1v1h-1zM104 166h1v1h-1zM104 175h1v1h-1zM104 185h1v1h-1zM109 5h1v1h-1zM109 10h1v1h-1zM109 19h1v1h-1zM109 29h1v1h-1zM109 38h1v1h-1zM109 43h1v1h-1zM109 48h1v1h-1zM109 57h1v1h-1zM109 62h1v1h-1zM109 71h1v1h-1zM109 81h1v1h-1zM109 90h1v1h-1zM109 95h1v1h-1zM109 104h1v1h-1zM109 109h1v1h-1zM109 114h1v1h-1zM109 123h1v1h-1zM109 133h1v1h-1zM109 142h1v1h-1zM109 147h1v1h-1zM109 156h1v1h-1zM109 161h1v1h-1zM109 166h1v1h-1zM109 175h1v1h-1zM109 180h1v1h-1zM109 185h1v1h-1zM118 5h1v1h-1zM118 10h1v1h-1zM118 19h1v1h-1zM118 29h1v1h-1zM118 38h1v1h-1zM118 43h1v1h-1zM118 48h1v1h-1zM118 57h1v1h-1zM118 62h1v1h-1zM118 71h1v1h-1zM118 81h1v1h-1zM118 90h1v1h-1zM118 95h1v1h-1zM118 104h1v1h-1zM118 109h1v1h-1zM118 114h1v1h-1zM118 123h1v1h-1zM118 133h1v1h-1zM118 142h1v1h-1zM118 147h1v1h-1zM118 156h1v1h-1zM118 161h1v1h-1zM118 166h1v1h-1zM118 175h1v1h-1zM118 180h1v1h-1zM118 185h1v1h-1zM123 0h1v1h-1zM123 15h1v1h-1zM123 19h1v1h-1zM123 29h1v1h-1zM123 48h1v1h-1zM123 52h1v1h-1zM123 67h1v1h-1zM123 71h1v1h-1zM123 81h1v1h-1zM123 85h1v1h-1zM123 100h1v1h-1zM123 104h1v1h-1zM123 123h1v1h-1zM123 133h1v1h-1zM123 137h1v1h-1zM123 152h1v1h-1zM123 156h1v1h-1zM123 166h1v1h-1zM123 175h1v1h-1zM123 185h1v1h-1zM128 5h1v1h-1zM128 10h1v1h-1zM128 24h1v1h-1zM128 29h1v1h-1zM128 38h1v1h-1zM128 43h1v1h-1zM128 57h1v1h-1zM128 62h1v1h-1zM128 76h1v1h-1zM128 90h1v1h-1zM128 95h1v1h-1zM128 109h1v1h-1zM128 114h1v1h-1zM128 123h1v1h-1zM128 128h1v1h-1zM128 142h1v1h-1zM128 147h1v1h-1zM128 161h1v1h-1zM128 166h1v1h-1zM128 175h1v1h-1zM128 180h1v1h-1zM132 5h1v1h-1zM132 10h1v1h-1zM132 24h1v1h-1zM132 43h1v1h-1zM132 57h1v1h-1zM132 76h1v1h-1zM132 95h1v1h-1zM132 109h1v1h-1zM132 128h1v1h-1zM132 142h1v1h-1zM132 147h1v1h-1zM132 161h1v1h-1zM132 180h1v1h-1zM137 0h1v1h-1zM137 10h1v1h-1zM137 15h1v1h-1zM137 19h1v1h-1zM137 29h1v1h-1zM137 38h1v1h-1zM137 48h1v1h-1zM137 52h1v1h-1zM137 62h1v1h-1zM137 71h1v1h-1zM137 81h1v1h-1zM137 90h1v1h-1zM137 100h1v1h-1zM137 104h1v1h-1zM137 114h1v1h-1zM137 123h1v1h-1zM137 133h1v1h-1zM137 137h1v1h-1zM137 142h1v1h-1zM137 152h1v1h-1zM137 156h1v1h-1zM137 166h1v1h-1zM137 175h1v1h-1zM137 185h1v1h-1zM142 0h1v1h-1zM142 5h1v1h-1zM142 10h1v1h-1zM142 19h1v1h-1zM142 29h1v1h-1zM142 38h1v1h-1zM142 48h1v1h-1zM142 52h1v1h-1zM142 62h1v1h-1zM142 71h1v1h-1zM142 81h1v1h-1zM142 90h1v1h-1zM142 100h1v1h-1zM142 104h1v1h-1zM142 114h1v1h-1zM142 123h1v1h-1zM142 133h1v1h-1zM142 142h1v1h-1zM142 147h1v1h-1zM142 152h1v1h-1zM142 156h1v1h-1zM142 166h1v1h-1zM142 175h1v1h-1zM142 185h1v1h-1zM147 5h1v1h-1zM147 24h1v1h-1zM147 43h1v1h-1zM147 57h1v1h-1zM147 76h1v1h-1zM147 95h1v1h-1zM147 109h1v1h-1zM147 128h1v1h-1zM147 147h1v1h-1zM147 161h1v1h-1zM147 180h1v1h-1zM151 5h1v1h-1zM151 10h1v1h-1zM151 24h1v1h-1zM151 29h1v1h-1zM151 38h1v1h-1zM151 43h1v1h-1zM151 57h1v1h-1zM151 62h1v1h-1zM151 71h1v1h-1zM151 76h1v1h-1zM151 81h1v1h-1zM151 90h1v1h-1zM151 95h1v1h-1zM151 109h1v1h-1zM151 114h1v1h-1zM151 123h1v1h-1zM151 128h1v1h-1zM151 142h1v1h-1zM151 147h1v1h-1zM151 161h1v1h-1zM151 166h1v1h-1zM151 175h1v1h-1zM151 180h1v1h-1zM156 0h1v1h-1zM156 15h1v1h-1zM156 19h1v1h-1zM156 29h1v1h-1zM156 33h1v1h-1zM156 48h1v1h-1zM156 52h1v1h-1zM156 67h1v1h-1zM156 71h1v1h-1zM156 81h1v1h-1zM156 85h1v1h-1zM156 100h1v1h-1zM156 104h1v1h-1zM156 119h1v1h-1zM156 123h1v1h-1zM156 133h1v1h-1zM156 137h1v1h-1zM156 152h1v1h-1zM156 156h1v1h-1zM156 185h1v1h-1zM161 5h1v1h-1zM161 10h1v1h-1zM161 19h1v1h-1zM161 24h1v1h-1zM161 29h1v1h-1zM161 38h1v1h-1zM161 43h1v1h-1zM161 57h1v1h-1zM161 62h1v1h-1zM161 71h1v1h-1zM161 76h1v1h-1zM161 81h1v1h-1zM161 90h1v1h-1zM161 95h1v1h-1zM161 109h1v1h-1zM161 114h1v1h-1zM161 123h1v1h-1zM161 128h1v1h-1zM161 133h1v1h-1zM161 142h1v1h-1zM161 147h1v1h-1zM161 156h1v1h-1zM161 161h1v1h-1zM161 166h1v1h-1zM161 175h1v1h-1zM161 180h1v1h-1zM161 185h1v1h-1zM165 24h1v1h-1zM165 76h1v1h-1zM165 128h1v1h-1zM170 5h1v1h-1zM170 10h1v1h-1zM170 19h1v1h-1zM170 29h1v1h-1zM170 38h1v1h-1zM170 43h1v1h-1zM170 48h1v1h-1zM170 57h1v1h-1zM170 62h1v1h-1zM170 71h1v1h-1zM170 81h1v1h-1zM170 90h1v1h-1zM170 95h1v1h-1zM170 104h1v1h-1zM170 109h1v1h-1zM170 114h1v1h-1zM170 123h1v1h-1zM170 133h1v1h-1zM170 142h1v1h-1zM170 147h1v1h-1zM170 156h1v1h-1zM170 166h1v1h-1zM170 175h1v1h-1zM170 185h1v1h-1zM175 0h1v1h-1zM175 15h1v1h-1zM175 19h1v1h-1zM175 29h1v1h-1zM175 38h1v1h-1zM175 48h1v1h-1zM175 52h1v1h-1zM175 67h1v1h-1zM175 71h1v1h-1zM175 81h1v1h-1zM175 85h1v1h-1zM175 100h1v1h-1zM175 104h1v1h-1zM175 114h1v1h-1zM175 123h1v1h-1zM175 133h1v1h-1zM175 137h1v1h-1zM175 152h1v1h-1zM175 156h1v1h-1zM175 166h1v1h-1zM175 175h1v1h-1zM175 185h1v1h-1zM180 5h1v1h-1zM180 10h1v1h-1zM180 24h1v1h-1zM180 38h1v1h-1zM180 43h1v1h-1zM180 57h1v1h-1zM180 62h1v1h-1zM180 76h1v1h-1zM180 90h1v1h-1zM180 95h1v1h-1zM180 109h1v1h-1zM180 114h1v1h-1zM180 128h1v1h-1zM180 142h1v1h-1zM180 147h1v1h-1zM180 161h1v1h-1zM180 166h1v1h-1zM180 175h1v1h-1zM180 180h1v1h-1zM184 5h1v1h-1zM184 10h1v1h-1zM184 24h1v1h-1zM184 38h1v1h-1zM184 43h1v1h-1zM184 57h1v1h-1zM184 62h1v1h-1zM184 76h1v1h-1zM184 90h1v1h-1zM184 95h1v1h-1zM184 109h1v1h-1zM184 114h1v1h-1zM184 128h1v1h-1zM184 142h1v1h-1zM184 147h1v1h-1zM184 161h1v1h-1zM184 180h1v1h-1z" fill="#8a8a8a"/><path d="M0 33h1v1h-1zM0 67h1v1h-1zM0 85h1v1h-1zM0 119h1v1h-1zM0 171h1v1h-1zM5 0h1v1h-1zM5 15h1v1h-1zM5 33h1v1h-1zM5 67h1v1h-1zM5 85h1v1h-1zM5 119h1v1h-1zM5 137h1v1h-1zM5 152h1v1h-1zM5 171h1v1h-1zM10 0h1v1h-1zM10 5h1v1h-1zM10 10h1v1h-1zM10 15h1v1h-1zM10 19h1v1h-1zM10 29h1v1h-1zM10 33h1v1h-1zM10 38h1v1h-1zM10 48h1v1h-1zM10 52h1v1h-1zM10 57h1v1h-1zM10 62h1v1h-1zM10 67h1v1h-1zM10 71h1v1h-1zM10 81h1v1h-1zM10 85h1v1h-1zM10 90h1v1h-1zM10 95h1v1h-1zM10 100h1v1h-1zM10 104h1v1h-1zM10 114h1v1h-1zM10 119h1v1h-1zM10 123h1v1h-1zM10 133h1v1h-1zM10 137h1v1h-1zM10 142h1v1h-1zM10 147h1v1h-1zM10 152h1v1h-1zM10 156h1v1h-1zM10 166h1v1h-1zM10 171h1v1h-1zM10 175h1v1h-1zM10 185h1v1h-1zM14 0h1v1h-1zM14 15h1v1h-1zM14 33h1v1h-1zM14 48h1v1h-1zM14 52h1v1h-1zM14 67h1v1h-1zM14 85h1v1h-1zM14 100h1v1h-1zM14 104h1v1h-1zM14 119h1v1h-1zM14 137h1v1h-1zM14 152h1v1h-1zM14 156h1v1h-1zM14 171h1v1h-1zM14 185h1v1h-1zM19 171h1v1h-1zM24 0h1v1h-1zM24 15h1v1h-1zM24 33h1v1h-1zM24 48h1v1h-1zM24 52h1v1h-1zM24 67h1v1h-1zM24 85h1v1h-1zM24 100h1v1h-1zM24 104h1v1h-1zM24 119h1v1h-1zM24 137h1v1h-1zM24 152h1v1h-1zM24 156h1v1h-1zM24 171h1v1h-1zM24 185h1v1h-1zM28 0h1v1h-1zM28 5h1v1h-1zM28 10h1v1h-1zM28 15h1v1h-1zM28 19h1v1h-1zM28 29h1v1h-1zM28 33h1v1h-1zM28 38h1v1h-1zM28 48h1v1h-1zM28 52h1v1h-1zM28 57h1v1h-1zM28 62h1v1h-1zM28 67h1v1h-1zM28 71h1v1h-1zM28 81h1v1h-1zM28 85h1v1h-1zM28 90h1v1h-1zM28 95h1v1h-1zM28 100h1v1h-1zM28 104h1v1h-1zM28 114h1v1h-1zM28 119h1v1h-1zM28 123h1v1h-1zM28 133h1v1h-1zM28 137h1v1h-1zM28 142h1v1h-1zM28 147h1v1h-1zM28 152h1v1h-1zM28 156h1v1h-1zM28 166h1v1h-1zM28 171h1v1h-1zM28 175h1v1h-1zM28 185h1v1h-1zM33 0h1v1h-1zM33 15h1v1h-1zM33 33h1v1h-1zM33 67h1v1h-1zM33 85h1v1h-1zM33 119h1v1h-1zM33 137h1v1h-1zM33 152h1v1h-1zM33 171h1v1h-1zM38 33h1v1h-1zM38 67h1v1h-1zM38 85h1v1h-1zM38 119h1v1h-1zM38 171h1v1h-1zM43 0h1v1h-1zM43 15h1v1h-1zM43 19h1v1h-1zM43 29h1v1h-1zM43 33h1v1h-1zM43 48h1v1h-1zM43 52h1v1h-1zM43 67h1v1h-1zM43 71h1v1h-1zM43 81h1v1h-1zM43 85h1v1h-1zM43 100h1v1h-1zM43 104h1v1h-1zM43 119h1v1h-1zM43 123h1v1h-1zM43 133h1v1h-1zM43 137h1v1h-1zM43 152h1v1h-1zM43 156h1v1h-1zM43 166h1v1h-1zM43 171h1v1h-1zM43 175h1v1h-1zM43 185h1v1h-1zM47 0h1v1h-1zM47 15h1v1h-1zM47 19h1v1h-1zM47 29h1v1h-1zM47 33h1v1h-1zM47 48h1v1h-1zM47 52h1v1h-1zM47 67h1v1h-1zM47 71h1v1h-1zM47 81h1v1h-1zM47 85h1v1h-1zM47 100h1v1h-1zM47 104h1v1h-1zM47 119h1v1h-1zM47 123h1v1h-1zM47 133h1v1h-1zM47 137h1v1h-1zM47 152h1v1h-1zM47 156h1v1h-1zM47 171h1v1h-1zM47 185h1v1h-1zM52 33h1v1h-1zM52 119h1v1h-1zM52 171h1v1h-1zM57 0h1v1h-1zM57 15h1v1h-1zM57 33h1v1h-1zM57 67h1v1h-1zM57 85h1v1h-1zM57 119h1v1h-1zM57 137h1v1h-1zM57 152h1v1h-1zM57 171h1v1h-1zM62 0h1v1h-1zM62 5h1v1h-1zM62 10h1v1h-1zM62 15h1v1h-1zM62 19h1v1h-1zM62 29h1v1h-1zM62 33h1v1h-1zM62 38h1v1h-1zM62 43h1v1h-1zM62 48h1v1h-1zM62 52h1v1h-1zM62 57h1v1h-1zM62 62h1v1h-1zM62 67h1v1h-1zM62 71h1v1h-1zM62 81h1v1h-1zM62 85h1v1h-1zM62 90h1v1h-1zM62 95h1v1h-1zM62 100h1v1h-1zM62 104h1v1h-1zM62 109h1v1h-1zM62 114h1v1h-1zM62 119h1v1h-1zM62 123h1v1h-1zM62 133h1v1h-1zM62 137h1v1h-1zM62 142h1v1h-1zM62 147h1v1h-1zM62 152h1v1h-1zM62 156h1v1h-1zM62 161h1v1h-1zM62 166h1v1h-1zM62 171h1v1h-1zM62 175h1v1h-1zM62 180h1v1h-1zM62 185h1v1h-1zM66 0h1v1h-1zM66 15h1v1h-1zM66 33h1v1h-1zM66 48h1v1h-1zM66 52h1v1h-1zM66 67h1v1h-1zM66 85h1v1h-1zM66 100h1v1h-1zM66 104h1v1h-1zM66 119h1v1h-1zM66 137h1v1h-1zM66 152h1v1h-1zM66 171h1v1h-1zM71 171h1v1h-1zM76 0h1v1h-1zM76 15h1v1h-1zM76 19h1v1h-1zM76 33h1v1h-1zM76 48h1v1h-1zM76 52h1v1h-1zM76 67h1v1h-1zM76 85h1v1h-1zM76 100h1v1h-1zM76 104h1v1h-1zM76 119h1v1h-1zM76 133h1v1h-1zM76 137h1v1h-1zM76 152h1v1h-1zM76 156h1v1h-1zM76 171h1v1h-1zM76 185h1v1h-1zM80 0h1v1h-1zM80 10h1v1h-1zM80 15h1v1h-1zM80 19h1v1h-1zM80 29h1v1h-1zM80 33h1v1h-1zM80 38h1v1h-1zM80 48h1v1h-1zM80 52h1v1h-1zM80 62h1v1h-1zM80 67h1v1h-1zM80 71h1v1h-1zM80 81h1v1h-1zM80 85h1v1h-1zM80 90h1v1h-1zM80 100h1v1h-1zM80 104h1v1h-1zM80 114h1v1h-1zM80 119h1v1h-1zM80 123h1v1h-1zM80 133h1v1h-1zM80 137h1v1h-1zM80 142h1v1h-1zM80 152h1v1h-1zM80 156h1v1h-1zM80 166h1v1h-1zM80 171h1v1h-1zM80 175h1v1h-1zM80 185h1v1h-1zM85 15h1v1h-1zM85 33h1v1h-1zM85 67h1v1h-1zM85 85h1v1h-1zM85 119h1v1h-1zM85 137h1v1h-1zM85 171h1v1h-1zM90 33h1v1h-1zM90 67h1v1h-1zM90 85h1v1h-1zM90 119h1v1h-1zM90 171h1v1h-1zM95 0h1v1h-1zM95 15h1v1h-1zM95 19h1v1h-1zM95 29h1v1h-1zM95 33h1v1h-1zM95 38h1v1h-1zM95 48h1v1h-1zM95 52h1v1h-1zM95 62h1v1h-1zM95 67h1v1h-1zM95 71h1v1h-1zM95 81h1v1h-1zM95 85h1v1h-1zM95 90h1v1h-1zM95 100h1v1h-1zM95 104h1v1h-1zM95 114h1v1h-1zM95 119h1v1h-1zM95 123h1v1h-1zM95 133h1v1h-1zM95 137h1v1h-1zM95 152h1v1h-1zM95 156h1v1h-1zM95 166h1v1h-1zM95 171h1v1h-1zM95 175h1v1h-1zM95 185h1v1h-1zM99 0h1v1h-1zM99 15h1v1h-1zM99 19h1v1h-1zM99 33h1v1h-1zM99 48h1v1h-1zM99 52h1v1h-1zM99 67h1v1h-1zM99 71h1v1h-1zM99 81h1v1h-1zM99 85h1v1h-1zM99 100h1v1h-1zM99 104h1v1h-1zM99 119h1v1h-1zM99 133h1v1h-1zM99 137h1v1h-1zM99 152h1v1h-1zM99 156h1v1h-1zM99 171h1v1h-1zM99 185h1v1h-1zM104 33h1v1h-1zM104 119h1v1h-1zM104 171h1v1h-1zM109 0h1v1h-1zM109 15h1v1h-1zM109 33h1v1h-1zM109 52h1v1h-1zM109 67h1v1h-1zM109 85h1v1h-1zM109 100h1v1h-1zM109 119h1v1h-1zM109 137h1v1h-1zM109 152h1v1h-1zM109 171h1v1h-1zM114 0h1v1h-1zM114 5h1v1h-1zM114 10h1v1h-1zM114 15h1v1h-1zM114 19h1v1h-1zM114 24h1v1h-1zM114 29h1v1h-1zM114 33h1v1h-1zM114 38h1v1h-1zM114 43h1v1h-1zM114 48h1v1h-1zM114 52h1v1h-1zM114 57h1v1h-1zM114 62h1v1h-1zM114 67h1v1h-1zM114 71h1v1h-1zM114 76h1v1h-1zM114 81h1v1h-1zM114 85h1v1h-1zM114 90h1v1h-1zM114 95h1v1h-1zM114 100h1v1h-1zM114 104h1v1h-1zM114 109h1v1h-1zM114 114h1v1h-1zM114 119h1v1h-1zM114 123h1v1h-1zM114 128h1v1h-1zM114 133h1v1h-1zM114 137h1v1h-1zM114 142h1v1h-1zM114 147h1v1h-1zM114 152h1v1h-1zM114 156h1v1h-1zM114 161h1v1h-1zM114 166h1v1h-1zM114 171h1v1h-1zM114 175h1v1h-1zM114 180h1v1h-1zM114 185h1v1h-1zM118 0h1v1h-1zM118 15h1v1h-1zM118 33h1v1h-1zM118 52h1v1h-1zM118 67h1v1h-1zM118 85h1v1h-1zM118 100h1v1h-1zM118 119h1v1h-1zM118 137h1v1h-1zM118 152h1v1h-1zM118 171h1v1h-1zM123 33h1v1h-1zM123 119h1v1h-1zM123 171h1v1h-1zM128 0h1v1h-1zM128 15h1v1h-1zM128 19h1v1h-1zM128 33h1v1h-1zM128 48h1v1h-1zM128 52h1v1h-1zM128 67h1v1h-1zM128 71h1v1h-1zM128 81h1v1h-1zM128 85h1v1h-1zM128 100h1v1h-1zM128 104h1v1h-1zM128 119h1v1h-1zM128 133h1v1h-1zM128 137h1v1h-1zM128 152h1v1h-1zM128 156h1v1h-1zM128 171h1v1h-1zM128 185h1v1h-1zM132 0h1v1h-1zM132 15h1v1h-1zM132 19h1v1h-1zM132 29h1v1h-1zM132 33h1v1h-1zM132 38h1v1h-1zM132 48h1v1h-1zM132 52h1v1h-1zM132 62h1v1h-1zM132 67h1v1h-1zM132 71h1v1h-1zM132 81h1v1h-1zM132 85h1v1h-1zM132 90h1v1h-1zM132 100h1v1h-1zM132 104h1v1h-1zM132 114h1v1h-1zM132 119h1v1h-1zM132 123h1v1h-1zM132 133h1v1h-1zM132 137h1v1h-1zM132 152h1v1h-1zM132 156h1v1h-1zM132 166h1v1h-1zM132 171h1v1h-1zM132 175h1v1h-1zM132 185h1v1h-1zM137 33h1v1h-1zM137 67h1v1h-1zM137 85h1v1h-1zM137 119h1v1h-1zM137 171h1v1h-1zM142 15h1v1h-1zM142 33h1v1h-1zM142 67h1v1h-1zM142 85h1v1h-1zM142 119h1v1h-1zM142 137h1v1h-1zM142 171h1v1h-1zM147 0h1v1h-1zM147 10h1v1h-1zM147 15h1v1h-1zM147 19h1v1h-1zM147 29h1v1h-1zM147 33h1v1h-1zM147 38h1v1h-1zM147 48h1v1h-1zM147 52h1v1h-1zM147 62h1v1h-1zM147 67h1v1h-1zM147 71h1v1h-1zM147 81h1v1h-1zM147 85h1v1h-1zM147 90h1v1h-1zM147 100h1v1h-1zM147 104h1v1h-1zM147 114h1v1h-1zM147 119h1v1h-1zM147 123h1v1h-1zM147 133h1v1h-1zM147 137h1v1h-1zM147 142h1v1h-1zM147 152h1v1h-1zM147 156h1v1h-1zM147 166h1v1h-1zM147 171h1v1h-1zM147 175h1v1h-1zM147 185h1v1h-1zM151 0h1v1h-1zM151 15h1v1h-1zM151 19h1v1h-1zM151 33h1v1h-1zM151 48h1v1h-1zM151 52h1v1h-1zM151 67h1v1h-1zM151 85h1v1h-1zM151 100h1v1h-1zM151 104h1v1h-1zM151 119h1v1h-1zM151 133h1v1h-1zM151 137h1v1h-1zM151 152h1v1h-1zM151 156h1v1h-1zM151 171h1v1h-1zM151 185h1v1h-1zM156 171h1v1h-1zM161 0h1v1h-1zM161 15h1v1h-1zM161 33h1v1h-1zM161 48h1v1h-1zM161 52h1v1h-1zM161 67h1v1h-1zM161 85h1v1h-1zM161 100h1v1h-1zM161 104h1v1h-1zM161 119h1v1h-1zM161 137h1v1h-1zM161 152h1v1h-1zM161 171h1v1h-1zM165 0h1v1h-1zM165 5h1v1h-1zM165 10h1v1h-1zM165 15h1v1h-1zM165 19h1v1h-1zM165 29h1v1h-1zM165 33h1v1h-1zM165 38h1v1h-1zM165 43h1v1h-1zM165 48h1v1h-1zM165 52h1v1h-1zM165 57h1v1h-1zM165 62h1v1h-1zM165 67h1v1h-1zM165 71h1v1h-1zM165 81h1v1h-1zM165 85h1v1h-1zM165 90h1v1h-1zM165 95h1v1h-1zM165 100h1v1h-1zM165 104h1v1h-1zM165 109h1v1h-1zM165 114h1v1h-1zM165 119h1v1h-1zM165 123h1v1h-1zM165 133h1v1h-1zM165 137h1v1h-1zM165 142h1v1h-1zM165 147h1v1h-1zM165 152h1v1h-1zM165 156h1v1h-1zM165 161h1v1h-1zM165 166h1v1h-1zM165 171h1v1h-1zM165 175h1v1h-1zM165 180h1v1h-1zM165 185h1v1h-1zM170 0h1v1h-1zM170 15h1v1h-1zM170 33h1v1h-1zM170 52h1v1h-1zM170 67h1v1h-1zM170 85h1v1h-1zM170 100h1v1h-1zM170 119h1v1h-1zM170 137h1v1h-1zM170 152h1v1h-1zM170 171h1v1h-1zM175 33h1v1h-1zM175 119h1v1h-1zM175 171h1v1h-1zM180 0h1v1h-1zM180 15h1v1h-1zM180 19h1v1h-1zM180 29h1v1h-1zM180 33h1v1h-1zM180 48h1v1h-1zM180 52h1v1h-1zM180 67h1v1h-1zM180 71h1v1h-1zM180 81h1v1h-1zM180 85h1v1h-1zM180 100h1v1h-1zM180 104h1v1h-1zM180 119h1v1h-1zM180 123h1v1h-1zM180 133h1v1h-1zM180 137h1v1h-1zM180 152h1v1h-1zM180 156h1v1h-1zM180 171h1v1h-1zM180 185h1v1h-1zM184 0h1v1h-1zM184 15h1v1h-1zM184 19h1v1h-1zM184 29h1v1h-1zM184 33h1v1h-1zM184 48h1v1h-1zM184 52h1v1h-1zM184 67h1v1h-1zM184 71h1v1h-1zM184 81h1v1h-1zM184 85h1v1h-1zM184 100h1v1h-1zM184 104h1v1h-1zM184 119h1v1h-1zM184 123h1v1h-1zM184 133h1v1h-1zM184 137h1v1h-1zM184 152h1v1h-1zM184 156h1v1h-1zM184 166h1v1h-1zM184 171h1v1h-1zM184 175h1v1h-1zM184 185h1v1h-1z" fill="#a4a4a4"/></pattern></defs><path d="M343.10 152.47 L343.10 143.03 L508.48 143.03 L508.48 154.84" fill="none" stroke="#b23030" stroke-width="1.1"/><path d="M399.80 143.03 L399.80 161.93" fill="none" stroke="#a04848" stroke-width="1.1"/><path d="M456.50 143.03 L456.50 161.93" fill="none" stroke="#b03838" stroke-width="1.1"/><path d="M343.10 143.03 L343.10 161.93" fill="none" stroke="#d06060" stroke-width="1.1"/><path d="M508.48 143.03 L508.48 161.93" fill="none" stroke="#b03030" stroke-width="1.1"/><circle cx="380.90" cy="143.03" r="1.3" fill="#d01818"/><circle cx="399.80" cy="143.03" r="1.3" fill="#d01818"/><circle cx="456.50" cy="143.03" r="1.3" fill="#d01818"/><path d="M380.90 143.03 L380.90 129.40" fill="none" stroke="#555" stroke-width="1.1"/><path d="M371.00 129.40 L390.60 129.40" fill="none" stroke="#555" stroke-width="0.9"/><path d="M328.93 161.93 L328.93 152.47 L560.45 152.47" fill="none" stroke="#333" stroke-width="1.1"/><circle cx="385.62" cy="152.47" r="1.1" fill="#111"/><circle cx="442.32" cy="152.47" r="1.1" fill="#111"/><circle cx="494.30" cy="152.47" r="1.1" fill="#111"/><circle cx="560.45" cy="152.47" r="1.1" fill="#111"/><path d="M385.62 152.47 L385.62 161.93" fill="none" stroke="#333" stroke-width="1.1"/><path d="M442.32 152.47 L442.32 161.93" fill="none" stroke="#333" stroke-width="1.1"/><path d="M494.30 152.47 L494.30 161.93" fill="none" stroke="#333" stroke-width="1.1"/><path d="M560.45 152.47 L560.45 162.00" fill="none" stroke="#333" stroke-width="1.1"/><path d="M555.50 161.80 L565.50 161.80" fill="none" stroke="#444" stroke-width="0.8"/><path d="M557.30 163.60 L563.70 163.60" fill="none" stroke="#555" stroke-width="0.8"/><path d="M559.00 165.40 L562.00 165.40" fill="none" stroke="#666" stroke-width="0.8"/><path d="M560.45 152.47 L560.45 147.80 L711.70 147.80 L711.70 157.50" fill="none" stroke="#9a9a9a" stroke-width="1.1"/><path d="M328.93 158.62 L328.93 163.20" fill="none" stroke="#3a46b0" stroke-width="1.1"/><path d="M343.10 158.62 L343.10 163.20" fill="none" stroke="#3a46b0" stroke-width="1.1"/><circle cx="328.93" cy="165" r="1.35" fill="#fff" stroke="#3a46b0" stroke-width="0.8"/><circle cx="343.10" cy="165" r="1.35" fill="#fff" stroke="#3a46b0" stroke-width="0.8"/><path d="M329.82 166.00 L342.20 181.20" fill="none" stroke="#2c3690" stroke-width="1.0"/><circle cx="343.10" cy="182.2" r="1.35" fill="#fff" stroke="#3a46b0" stroke-width="0.8"/><path d="M343.10 183.80 L343.10 190.00" fill="none" stroke="#3a46b0" stroke-width="1.1"/><path d="M385.62 158.62 L385.62 163.20" fill="none" stroke="#3a46b0" stroke-width="1.1"/><path d="M399.80 158.62 L399.80 163.20" fill="none" stroke="#3a46b0" stroke-width="1.1"/><circle cx="385.62" cy="165" r="1.35" fill="#fff" stroke="#3a46b0" stroke-width="0.8"/><circle cx="399.80" cy="165" r="1.35" fill="#fff" stroke="#3a46b0" stroke-width="0.8"/><path d="M386.52 166.00 L398.90 181.20" fill="none" stroke="#2c3690" stroke-width="1.0"/><circle cx="399.80" cy="182.2" r="1.35" fill="#fff" stroke="#3a46b0" stroke-width="0.8"/><path d="M399.80 183.80 L399.80 190.00" fill="none" stroke="#3a46b0" stroke-width="1.1"/><path d="M442.32 158.62 L442.32 163.20" fill="none" stroke="#3a46b0" stroke-width="1.1"/><path d="M456.50 158.62 L456.50 163.20" fill="none" stroke="#3a46b0" stroke-width="1.1"/><circle cx="442.32" cy="165" r="1.35" fill="#fff" stroke="#3a46b0" stroke-width="0.8"/><circle cx="456.50" cy="165" r="1.35" fill="#fff" stroke="#3a46b0" stroke-width="0.8"/><path d="M443.22 166.00 L455.60 181.20" fill="none" stroke="#2c3690" stroke-width="1.0"/><circle cx="456.50" cy="182.2" r="1.35" fill="#fff" stroke="#3a46b0" stroke-width="0.8"/><path d="M456.50 183.80 L456.50 190.00" fill="none" stroke="#3a46b0" stroke-width="1.1"/><path d="M494.30 158.62 L494.30 163.20" fill="none" stroke="#3a46b0" stroke-width="1.1"/><path d="M508.48 158.62 L508.48 163.20" fill="none" stroke="#3a46b0" stroke-width="1.1"/><circle cx="494.30" cy="165" r="1.35" fill="#fff" stroke="#3a46b0" stroke-width="0.8"/><circle cx="508.48" cy="165" r="1.35" fill="#fff" stroke="#3a46b0" stroke-width="0.8"/><path d="M495.20 166.00 L507.58 181.20" fill="none" stroke="#2c3690" stroke-width="1.0"/><circle cx="508.48" cy="182.2" r="1.35" fill="#fff" stroke="#3a46b0" stroke-width="0.8"/><path d="M508.48 183.80 L508.48 190.00" fill="none" stroke="#3a46b0" stroke-width="1.1"/><path d="M343.10 190.00 L343.10 612.00" fill="none" stroke="#80e080" stroke-width="1.2"/><path d="M343.10 199.72 L362.00 199.72 L362.00 217.50" fill="none" stroke="#98e098" stroke-width="1.1"/><circle cx="343.10" cy="199.72" r="1.4" fill="#80e080"/><path d="M355.70 217.5 H368.30 L362.00 229.3 Z" fill="#fff" stroke="#222" stroke-width="1"/><circle cx="362.00" cy="231" r="1.6" fill="#fff" stroke="#222" stroke-width="0.9"/><path d="M362.00 232.60 L362.00 612.00" fill="none" stroke="#648c6c" stroke-width="1.2"/><path d="M399.80 190.00 L399.80 612.00" fill="none" stroke="#9a5aa8" stroke-width="1.2"/><path d="M399.80 199.72 L418.70 199.72 L418.70 217.50" fill="none" stroke="#9a5aa8" stroke-width="1.1"/><circle cx="399.80" cy="199.72" r="1.4" fill="#9a5aa8"/><path d="M412.40 217.5 H425.00 L418.70 229.3 Z" fill="#fff" stroke="#222" stroke-width="1"/><circle cx="418.70" cy="231" r="1.6" fill="#fff" stroke="#222" stroke-width="0.9"/><path d="M418.70 232.60 L418.70 612.00" fill="none" stroke="#3c2c58" stroke-width="1.2"/><path d="M456.50 190.00 L456.50 612.00" fill="none" stroke="#66dcee" stroke-width="1.2"/><path d="M456.50 199.72 L475.40 199.72 L475.40 217.50" fill="none" stroke="#66dcee" stroke-width="1.1"/><circle cx="456.50" cy="199.72" r="1.4" fill="#66dcee"/><path d="M469.10 217.5 H481.70 L475.40 229.3 Z" fill="#fff" stroke="#222" stroke-width="1"/><circle cx="475.40" cy="231" r="1.6" fill="#fff" stroke="#222" stroke-width="0.9"/><path d="M475.40 232.60 L475.40 612.00" fill="none" stroke="#1c2a8c" stroke-width="1.2"/><path d="M508.48 190.00 L508.48 612.00" fill="none" stroke="#b23030" stroke-width="1.2"/><path d="M508.48 199.72 L527.38 199.72 L527.38 217.50" fill="none" stroke="#b23030" stroke-width="1.1"/><circle cx="508.48" cy="199.72" r="1.4" fill="#b23030"/><path d="M521.08 217.5 H533.67 L527.38 229.3 Z" fill="#fff" stroke="#222" stroke-width="1"/><circle cx="527.38" cy="231" r="1.6" fill="#fff" stroke="#222" stroke-width="0.9"/><path d="M527.38 232.60 L527.38 612.00" fill="none" stroke="#3c1414" stroke-width="1.2"/><path d="M456.50 261.15 L537.80 261.15" fill="none" stroke="#66dcee" stroke-width="1.1"/><path d="M537.80 261.15 L546.40 261.15" fill="none" stroke="#222" stroke-width="1.1"/><circle cx="456.50" cy="261.15" r="1.35" fill="#66dcee"/><path d="M508.48 270.60 L537.80 270.60" fill="none" stroke="#b23030" stroke-width="1.1"/><path d="M537.80 270.60 L546.40 270.60" fill="none" stroke="#222" stroke-width="1.1"/><circle cx="508.48" cy="270.60" r="1.35" fill="#b23030"/><path d="M546.40 259.40 H558.80 A6.48 6.48 0 0 1 558.80 272.35 H546.40 Z" fill="#fff" stroke="#262626" stroke-width="0.95"/><path d="M399.80 294.23 L537.80 294.23" fill="none" stroke="#9a5aa8" stroke-width="1.1"/><path d="M537.80 294.23 L546.40 294.23" fill="none" stroke="#222" stroke-width="1.1"/><circle cx="399.80" cy="294.23" r="1.35" fill="#9a5aa8"/><path d="M508.48 303.67 L537.80 303.67" fill="none" stroke="#d07070" stroke-width="1.1"/><path d="M537.80 303.67 L546.40 303.67" fill="none" stroke="#222" stroke-width="1.1"/><circle cx="508.48" cy="303.67" r="1.35" fill="#d07070"/><path d="M546.40 292.48 H558.80 A6.47 6.47 0 0 1 558.80 305.42 H546.40 Z" fill="#fff" stroke="#262626" stroke-width="0.95"/><path d="M418.70 313.12 L542.20 313.12" fill="none" stroke="#222" stroke-width="1.1"/><path d="M542.20 313.12 L550.80 313.12" fill="none" stroke="#222" stroke-width="1.1"/><circle cx="418.70" cy="313.12" r="1.35" fill="#222"/><path d="M527.38 322.57 L542.20 322.57" fill="none" stroke="#6c2424" stroke-width="1.1"/><path d="M542.20 322.57 L550.80 322.57" fill="none" stroke="#222" stroke-width="1.1"/><circle cx="527.38" cy="322.57" r="1.35" fill="#6c2424"/><path d="M550.80 311.38 H563.20 A6.47 6.47 0 0 1 563.20 324.32 H550.80 Z" fill="#fff" stroke="#262626" stroke-width="0.95"/><path d="M565.27 265.88 L585.40 265.88" fill="none" stroke="#aaa" stroke-width="1.1"/><path d="M565.27 298.95 L574.62 298.95" fill="none" stroke="#222" stroke-width="1.1"/><path d="M574.62 298.95 L574.62 275.32" fill="none" stroke="#7a3a3a" stroke-width="1.1"/><path d="M574.62 275.32 L585.50 275.32" fill="none" stroke="#222" stroke-width="1.1"/><path d="M584.40 264.18 C593.40 264.18 598.90 265.68 602.70 270.55 C598.90 275.43 593.40 276.93 584.40 276.93 Q588.40 270.55 584.40 264.18 Z" fill="#fff" stroke="#262626" stroke-width="0.95"/><path d="M602.70 270.60 L623.50 270.60" fill="none" stroke="#222" stroke-width="1.1"/><path d="M569.67 317.85 L612.42 317.85 L612.42 280.05 L616.00 280.05" fill="none" stroke="#c89292" stroke-width="1.1"/><path d="M616.00 280.05 L623.50 280.05" fill="none" stroke="#222" stroke-width="1.1"/><path d="M622.50 268.90 C631.50 268.90 637.00 270.40 640.80 275.27 C637.00 280.15 631.50 281.65 622.50 281.65 Q626.50 275.27 622.50 268.90 Z" fill="#fff" stroke="#262626" stroke-width="0.95"/><path d="M640.80 275.32 L661.00 275.32" fill="none" stroke="#222" stroke-width="1.1"/><path d="M343.10 284.77 L651.40 284.77" fill="none" stroke="#80e080" stroke-width="1.1"/><path d="M651.40 284.77 L661.00 284.77" fill="none" stroke="#222" stroke-width="1.1"/><circle cx="343.10" cy="284.77" r="1.35" fill="#80e080"/><path d="M660.00 273.62 C669.00 273.62 674.50 275.12 678.30 280.00 C674.50 284.88 669.00 286.38 660.00 286.38 Q664.00 280.00 660.00 273.62 Z" fill="#fff" stroke="#262626" stroke-width="0.95"/><path d="M678.30 280.05 L697.50 280.05 L697.50 251.00" fill="none" stroke="#c84848" stroke-width="1.1"/><path d="M418.70 350.92 L585.80 350.92" fill="none" stroke="#a898b8" stroke-width="1.1"/><path d="M585.80 350.92 L595.40 350.92" fill="none" stroke="#222" stroke-width="1.1"/><circle cx="418.70" cy="350.92" r="1.35" fill="#a898b8"/><path d="M456.50 374.55 L546.90 374.55" fill="none" stroke="#66dcee" stroke-width="1.1"/><path d="M546.90 374.55 L555.50 374.55" fill="none" stroke="#222" stroke-width="1.1"/><circle cx="456.50" cy="374.55" r="1.35" fill="#66dcee"/><path d="M508.48 384.00 L546.90 384.00" fill="none" stroke="#b23030" stroke-width="1.1"/><path d="M546.90 384.00 L555.50 384.00" fill="none" stroke="#222" stroke-width="1.1"/><circle cx="508.48" cy="384.00" r="1.35" fill="#b23030"/><path d="M555.50 372.80 H567.90 A6.48 6.48 0 0 1 567.90 385.75 H555.50 Z" fill="#fff" stroke="#262626" stroke-width="0.95"/><path d="M475.40 398.17 L546.90 398.17" fill="none" stroke="#1c2a8c" stroke-width="1.1"/><path d="M546.90 398.17 L555.50 398.17" fill="none" stroke="#222" stroke-width="1.1"/><circle cx="475.40" cy="398.17" r="1.35" fill="#1c2a8c"/><path d="M527.38 407.62 L546.90 407.62" fill="none" stroke="#6c2424" stroke-width="1.1"/><path d="M546.90 407.62 L555.50 407.62" fill="none" stroke="#222" stroke-width="1.1"/><circle cx="527.38" cy="407.62" r="1.35" fill="#6c2424"/><path d="M555.50 396.42 H567.90 A6.48 6.48 0 0 1 567.90 409.38 H555.50 Z" fill="#fff" stroke="#262626" stroke-width="0.95"/><path d="M574.38 379.27 L584.40 379.27 L584.40 360.38 L595.40 360.38" fill="none" stroke="#222" stroke-width="1.1"/><path d="M594.40 349.22 C603.40 349.22 608.90 350.72 612.70 355.60 C608.90 360.48 603.40 361.98 594.40 361.98 Q598.40 355.60 594.40 349.22 Z" fill="#fff" stroke="#262626" stroke-width="0.95"/><path d="M612.70 355.65 L633.50 355.65" fill="none" stroke="#222" stroke-width="1.1"/><path d="M574.38 402.90 L621.90 402.90" fill="none" stroke="#d88080" stroke-width="1.1"/><path d="M621.90 402.90 L621.90 365.10 L633.50 365.10" fill="none" stroke="#9a4848" stroke-width="1.1"/><path d="M632.50 353.95 C641.50 353.95 647.00 355.45 650.80 360.32 C647.00 365.20 641.50 366.70 632.50 366.70 Q636.50 360.32 632.50 353.95 Z" fill="#fff" stroke="#262626" stroke-width="0.95"/><path d="M650.80 360.38 L707.20 360.38 L707.20 251.00" fill="none" stroke="#a04545" stroke-width="1.1"/><path d="M475.40 445.42 L547.40 445.42" fill="none" stroke="#2a3aa8" stroke-width="1.1"/><path d="M547.40 445.42 L557.00 445.42" fill="none" stroke="#222" stroke-width="1.1"/><circle cx="475.40" cy="445.42" r="1.35" fill="#2a3aa8"/><path d="M399.80 454.88 L547.40 454.88" fill="none" stroke="#df8ce0" stroke-width="1.1"/><path d="M547.40 454.88 L557.00 454.88" fill="none" stroke="#222" stroke-width="1.1"/><circle cx="399.80" cy="454.88" r="1.35" fill="#df8ce0"/><path d="M556.00 443.72 C565.00 443.72 570.50 445.22 574.30 450.10 C570.50 454.98 565.00 456.48 556.00 456.48 Q560.00 450.10 556.00 443.72 Z" fill="#fff" stroke="#262626" stroke-width="0.95"/><path d="M574.30 450.15 L594.90 450.15" fill="none" stroke="#222" stroke-width="1.1"/><path d="M508.48 459.60 L585.30 459.60" fill="none" stroke="#b23030" stroke-width="1.1"/><path d="M585.30 459.60 L594.90 459.60" fill="none" stroke="#222" stroke-width="1.1"/><circle cx="508.48" cy="459.60" r="1.35" fill="#b23030"/><path d="M593.90 448.45 C602.90 448.45 608.40 449.95 612.20 454.82 C608.40 459.70 602.90 461.20 593.90 461.20 Q597.90 454.82 593.90 448.45 Z" fill="#fff" stroke="#262626" stroke-width="0.95"/><path d="M612.20 454.88 L716.30 454.88 L716.30 251.00" fill="none" stroke="#c04444" stroke-width="1.1"/><path d="M418.70 487.95 L546.60 487.95" fill="none" stroke="#6e6088" stroke-width="1.1"/><path d="M546.60 487.95 L555.20 487.95" fill="none" stroke="#222" stroke-width="1.1"/><circle cx="418.70" cy="487.95" r="1.35" fill="#6e6088"/><path d="M527.38 497.40 L546.60 497.40" fill="none" stroke="#6c2424" stroke-width="1.1"/><path d="M546.60 497.40 L555.20 497.40" fill="none" stroke="#222" stroke-width="1.1"/><circle cx="527.38" cy="497.40" r="1.35" fill="#6c2424"/><path d="M555.20 486.20 H567.60 A6.47 6.47 0 0 1 567.60 499.15 H555.20 Z" fill="#fff" stroke="#262626" stroke-width="0.95"/><path d="M574.08 492.67 L595.00 492.67" fill="none" stroke="#222" stroke-width="1.1"/><path d="M456.50 516.30 L542.10 516.30" fill="none" stroke="#66dcee" stroke-width="1.1"/><path d="M542.10 516.30 L550.70 516.30" fill="none" stroke="#222" stroke-width="1.1"/><circle cx="456.50" cy="516.30" r="1.35" fill="#66dcee"/><path d="M527.38 525.75 L542.10 525.75" fill="none" stroke="#6c2424" stroke-width="1.1"/><path d="M542.10 525.75 L550.70 525.75" fill="none" stroke="#222" stroke-width="1.1"/><circle cx="527.38" cy="525.75" r="1.35" fill="#6c2424"/><path d="M550.70 514.55 H563.10 A6.48 6.48 0 0 1 563.10 527.50 H550.70 Z" fill="#fff" stroke="#262626" stroke-width="0.95"/><path d="M569.58 521.02 L584.00 521.02 L584.00 502.12 L595.00 502.12" fill="none" stroke="#222" stroke-width="1.1"/><path d="M594.00 490.97 C603.00 490.97 608.50 492.47 612.30 497.35 C608.50 502.22 603.00 503.72 594.00 503.72 Q598.00 497.35 594.00 490.97 Z" fill="#fff" stroke="#262626" stroke-width="0.95"/><path d="M612.30 497.40 L632.20 497.40" fill="none" stroke="#222" stroke-width="1.1"/><path d="M418.70 539.92 L542.10 539.92" fill="none" stroke="#6e6088" stroke-width="1.1"/><path d="M542.10 539.92 L550.70 539.92" fill="none" stroke="#222" stroke-width="1.1"/><circle cx="418.70" cy="539.92" r="1.35" fill="#6e6088"/><path d="M456.50 549.38 L542.10 549.38" fill="none" stroke="#66dcee" stroke-width="1.1"/><path d="M542.10 549.38 L550.70 549.38" fill="none" stroke="#222" stroke-width="1.1"/><circle cx="456.50" cy="549.38" r="1.35" fill="#66dcee"/><path d="M550.70 538.17 H563.10 A6.48 6.48 0 0 1 563.10 551.12 H550.70 Z" fill="#fff" stroke="#262626" stroke-width="0.95"/><path d="M569.58 544.65 L617.30 544.65 L617.30 506.85 L632.20 506.85" fill="none" stroke="#c06060" stroke-width="1.1"/><path d="M631.20 495.70 C640.20 495.70 645.70 497.20 649.50 502.07 C645.70 506.95 640.20 508.45 631.20 508.45 Q635.20 502.07 631.20 495.70 Z" fill="#fff" stroke="#262626" stroke-width="0.95"/><path d="M649.50 502.12 L670.90 502.12" fill="none" stroke="#222" stroke-width="1.1"/><path d="M399.80 558.83 L542.10 558.83" fill="none" stroke="#df8ce0" stroke-width="1.1"/><path d="M542.10 558.83 L550.70 558.83" fill="none" stroke="#222" stroke-width="1.1"/><circle cx="399.80" cy="558.83" r="1.35" fill="#df8ce0"/><path d="M475.40 568.27 L542.10 568.27" fill="none" stroke="#1c2a8c" stroke-width="1.1"/><path d="M542.10 568.27 L550.70 568.27" fill="none" stroke="#222" stroke-width="1.1"/><circle cx="475.40" cy="568.27" r="1.35" fill="#1c2a8c"/><path d="M550.70 557.08 H563.10 A6.47 6.47 0 0 1 563.10 570.02 H550.70 Z" fill="#fff" stroke="#262626" stroke-width="0.95"/><path d="M569.58 563.55 L589.00 563.55" fill="none" stroke="#222" stroke-width="1.1"/><path d="M508.48 573.00 L579.40 573.00" fill="none" stroke="#b23030" stroke-width="1.1"/><path d="M579.40 573.00 L589.00 573.00" fill="none" stroke="#222" stroke-width="1.1"/><circle cx="508.48" cy="573.00" r="1.35" fill="#b23030"/><path d="M588.00 561.85 C597.00 561.85 602.50 563.35 606.30 568.22 C602.50 573.10 597.00 574.60 588.00 574.60 Q592.00 568.22 588.00 561.85 Z" fill="#fff" stroke="#262626" stroke-width="0.95"/><path d="M606.30 568.27 L654.70 568.27 L654.70 511.57 L670.90 511.57" fill="none" stroke="#c04848" stroke-width="1.1"/><path d="M669.90 500.42 C678.90 500.42 684.40 501.92 688.20 506.80 C684.40 511.67 678.90 513.17 669.90 513.17 Q673.90 506.80 669.90 500.42 Z" fill="#fff" stroke="#262626" stroke-width="0.95"/><path d="M688.20 506.85 L726.50 506.85 L726.50 251.00" fill="none" stroke="#d09090" stroke-width="1.1"/><path d="M418.70 591.90 L551.40 591.90" fill="none" stroke="#6e6088" stroke-width="1.1"/><path d="M551.40 591.90 L560.00 591.90" fill="none" stroke="#222" stroke-width="1.1"/><circle cx="418.70" cy="591.90" r="1.35" fill="#6e6088"/><path d="M527.38 601.35 L551.40 601.35" fill="none" stroke="#6c2424" stroke-width="1.1"/><path d="M551.40 601.35 L560.00 601.35" fill="none" stroke="#222" stroke-width="1.1"/><circle cx="527.38" cy="601.35" r="1.35" fill="#6c2424"/><path d="M560.00 590.15 H572.40 A6.47 6.47 0 0 1 572.40 603.10 H560.00 Z" fill="#fff" stroke="#262626" stroke-width="0.95"/><path d="M578.88 596.62 L600.20 596.62" fill="none" stroke="#222" stroke-width="1.1"/><path d="M580.00 606.08 L600.20 606.08" fill="none" stroke="#222" stroke-width="1.1"/><path d="M599.20 594.92 C608.20 594.92 613.70 596.42 617.50 601.30 C613.70 606.18 608.20 607.68 599.20 607.68 Q603.20 601.30 599.20 594.92 Z" fill="#fff" stroke="#262626" stroke-width="0.95"/><path d="M617.50 601.35 L736.00 601.35 L736.00 251.00" fill="none" stroke="#8a3030" stroke-width="1.1"/><path d="M744.60 251.00 L744.60 612.00" fill="none" stroke="#c03838" stroke-width="1.1"/><path d="M754.20 251.00 L754.20 612.00" fill="none" stroke="#c84040" stroke-width="1.1"/><path d="M711.70 199.00 L711.70 204.00" fill="none" stroke="#555" stroke-width="1.1"/><path d="M711.70 204.00 L711.70 209.00 L697.50 209.00 L697.50 229.00" fill="none" stroke="#cc6a6a" stroke-width="1.1"/><path d="M716.70 199.00 L716.70 204.00" fill="none" stroke="#555" stroke-width="1.1"/><path d="M716.70 204.00 L716.70 213.30 L706.90 213.30 L706.90 229.00" fill="none" stroke="#cc6a6a" stroke-width="1.1"/><path d="M720.80 199.00 L720.80 204.00" fill="none" stroke="#555" stroke-width="1.1"/><path d="M720.80 204.00 L720.80 218.30 L716.30 218.30 L716.30 229.00" fill="none" stroke="#cc6a6a" stroke-width="1.1"/><path d="M725.80 199.00 L725.80 229.00" fill="none" stroke="#d07070" stroke-width="1.1"/><path d="M725.80 199.00 L725.80 206.00" fill="none" stroke="#555" stroke-width="1.1"/><path d="M730.80 199.00 L730.80 204.00" fill="none" stroke="#555" stroke-width="1.1"/><path d="M730.80 204.00 L730.80 223.30 L735.20 223.30 L735.20 229.00" fill="none" stroke="#cc6a6a" stroke-width="1.1"/><path d="M735.80 199.00 L735.80 204.00" fill="none" stroke="#555" stroke-width="1.1"/><path d="M735.80 204.00 L735.80 218.30 L744.60 218.30 L744.60 229.00" fill="none" stroke="#cc6a6a" stroke-width="1.1"/><path d="M740.00 199.00 L740.00 204.00" fill="none" stroke="#555" stroke-width="1.1"/><path d="M740.00 204.00 L740.00 213.30 L754.20 213.30 L754.20 229.00" fill="none" stroke="#cc6a6a" stroke-width="1.1"/><rect x="692.8" y="228.5" width="66.4" height="22.8" fill="none" stroke="#2b3aa8" stroke-width="1"/><path d="M697.50 228.50 L697.50 233.00" fill="none" stroke="#2b3aa8" stroke-width="1.1"/><path d="M697.50 246.00 L697.50 251.30" fill="none" stroke="#2b3aa8" stroke-width="1.1"/><path d="M697.50 233.00 L699.30 234.00 L695.70 236.20 L699.30 238.40 L695.70 240.60 L699.30 242.80 L695.70 245.00 L697.50 246.00" fill="none" stroke="#222" stroke-width="0.9"/><path d="M706.90 228.50 L706.90 233.00" fill="none" stroke="#2b3aa8" stroke-width="1.1"/><path d="M706.90 246.00 L706.90 251.30" fill="none" stroke="#2b3aa8" stroke-width="1.1"/><path d="M706.90 233.00 L708.70 234.00 L705.10 236.20 L708.70 238.40 L705.10 240.60 L708.70 242.80 L705.10 245.00 L706.90 246.00" fill="none" stroke="#222" stroke-width="0.9"/><path d="M716.30 228.50 L716.30 233.00" fill="none" stroke="#2b3aa8" stroke-width="1.1"/><path d="M716.30 246.00 L716.30 251.30" fill="none" stroke="#2b3aa8" stroke-width="1.1"/><path d="M716.30 233.00 L718.10 234.00 L714.50 236.20 L718.10 238.40 L714.50 240.60 L718.10 242.80 L714.50 245.00 L716.30 246.00" fill="none" stroke="#222" stroke-width="0.9"/><path d="M725.80 228.50 L725.80 233.00" fill="none" stroke="#2b3aa8" stroke-width="1.1"/><path d="M725.80 246.00 L725.80 251.30" fill="none" stroke="#2b3aa8" stroke-width="1.1"/><path d="M725.80 233.00 L727.60 234.00 L724.00 236.20 L727.60 238.40 L724.00 240.60 L727.60 242.80 L724.00 245.00 L725.80 246.00" fill="none" stroke="#222" stroke-width="0.9"/><path d="M735.20 228.50 L735.20 233.00" fill="none" stroke="#2b3aa8" stroke-width="1.1"/><path d="M735.20 246.00 L735.20 251.30" fill="none" stroke="#2b3aa8" stroke-width="1.1"/><path d="M735.20 233.00 L737.00 234.00 L733.40 236.20 L737.00 238.40 L733.40 240.60 L737.00 242.80 L733.40 245.00 L735.20 246.00" fill="none" stroke="#222" stroke-width="0.9"/><path d="M744.60 228.50 L744.60 233.00" fill="none" stroke="#2b3aa8" stroke-width="1.1"/><path d="M744.60 246.00 L744.60 251.30" fill="none" stroke="#2b3aa8" stroke-width="1.1"/><path d="M744.60 233.00 L746.40 234.00 L742.80 236.20 L746.40 238.40 L742.80 240.60 L746.40 242.80 L742.80 245.00 L744.60 246.00" fill="none" stroke="#222" stroke-width="0.9"/><path d="M754.20 228.50 L754.20 233.00" fill="none" stroke="#2b3aa8" stroke-width="1.1"/><path d="M754.20 246.00 L754.20 251.30" fill="none" stroke="#2b3aa8" stroke-width="1.1"/><path d="M754.20 233.00 L756.00 234.00 L752.40 236.20 L756.00 238.40 L752.40 240.60 L756.00 242.80 L752.40 245.00 L754.20 246.00" fill="none" stroke="#222" stroke-width="0.9"/><circle cx="730.6" cy="124.2" r="3.2" fill="#fff" stroke="#222" stroke-width="1"/><path d="M730.60 127.40 L730.60 143.00" fill="none" stroke="#333" stroke-width="1.1"/><path d="M621.4 121.8 H633 A6.75 6.75 0 0 1 633 135.3 H621.4 Z" fill="#fff" stroke="#222" stroke-width="1"/><path d="M612.00 125.00 L621.40 125.00" fill="none" stroke="#333" stroke-width="1.1"/><path d="M612.00 132.10 L621.40 132.10" fill="none" stroke="#333" stroke-width="1.1"/><path d="M639.75 128.50 L650.80 128.50" fill="none" stroke="#555" stroke-width="1.1"/><path d="M679 121.8 C688 121.8 693.5 123.3 696.8 128.5 C693.5 133.8 688 135.3 679 135.3 Q683 128.5 679 121.8 Z" fill="#fff" stroke="#222" stroke-width="1"/><path d="M668.50 125.00 L680.50 125.00" fill="none" stroke="#333" stroke-width="1.1"/><path d="M668.50 132.10 L680.50 132.10" fill="none" stroke="#333" stroke-width="1.1"/><path d="M696.80 128.50 L707.50 128.50" fill="none" stroke="#555" stroke-width="1.1"/><path d="M616.5 213.5 L616.5 221.5 L618.3 219.8 L619.6 222.6 L620.6 222.1 L619.4 219.4 L621.8 219.3 Z" fill="#fff" stroke="#777" stroke-width="0.6"/><rect x="305" y="111.5" width="494" height="500" fill="url(#gp)" opacity="1"/><rect x="707.5" y="157.7" width="37.1" height="41.6" fill="#0a0a0a"/><path d="M717.60 162.95 L718.95 161.60 H734.75 L736.10 162.95 L734.75 164.30 H718.95 Z" fill="#e01c1c"/><path d="M717.30 163.50 L718.80 165.00 V175.50 L717.30 177.00 L715.80 175.50 V165.00 Z" fill="#e01c1c"/><path d="M736.30 163.50 L737.80 165.00 V175.50 L736.30 177.00 L734.80 175.50 V165.00 Z" fill="#e01c1c"/><path d="M717.30 177.70 L718.80 179.20 V189.70 L717.30 191.20 L715.80 189.70 V179.20 Z" fill="#e01c1c"/><path d="M736.30 177.70 L737.80 179.20 V189.70 L736.30 191.20 L734.80 189.70 V179.20 Z" fill="#e01c1c"/><path d="M717.60 191.25 L718.95 189.90 H734.75 L736.10 191.25 L734.75 192.60 H718.95 Z" fill="#e01c1c"/><text x="710.2" y="196.9" font-size="3.4" fill="#b8b8b8" font-family="Liberation Sans" letter-spacing="0.78">A B C D E F G</text><text x="709.3" y="161.6" font-size="3" fill="#cfcfcf" font-family="Liberation Sans">CK</text><rect x="305" y="101" width="504" height="10.5" fill="url(#gp)" opacity="1"/><rect x="305" y="101" width="10.5" height="510" fill="url(#gp)" opacity="1"/><rect x="799" y="101" width="10.5" height="510" fill="url(#gp)" opacity="1"/><path d="M305.00 111.30 L809.50 111.30" fill="none" stroke="#7a7a7a" stroke-width="1"/><path d="M315.60 111.30 L315.60 612.00" fill="none" stroke="#c4c4c4" stroke-width="1"/><path d="M799.20 111.30 L799.20 612.00" fill="none" stroke="#cccccc" stroke-width="1"/><path d="M316.30 101.00 L316.30 111.30" fill="none" stroke="#8a8a8a" stroke-width="1"/><text x="341.3" y="108.6" font-size="5.5" fill="#aaa" text-anchor="middle" font-family="Liberation Sans">0</text><path d="M366.71 101.00 L366.71 111.30" fill="none" stroke="#8a8a8a" stroke-width="1"/><text x="391.7" y="108.6" font-size="5.5" fill="#aaa" text-anchor="middle" font-family="Liberation Sans">1</text><path d="M417.12 101.00 L417.12 111.30" fill="none" stroke="#8a8a8a" stroke-width="1"/><text x="442.1" y="108.6" font-size="5.5" fill="#aaa" text-anchor="middle" font-family="Liberation Sans">2</text><path d="M467.53 101.00 L467.53 111.30" fill="none" stroke="#8a8a8a" stroke-width="1"/><text x="492.5" y="108.6" font-size="5.5" fill="#aaa" text-anchor="middle" font-family="Liberation Sans">3</text><path d="M517.94 101.00 L517.94 111.30" fill="none" stroke="#8a8a8a" stroke-width="1"/><text x="542.9" y="108.6" font-size="5.5" fill="#aaa" text-anchor="middle" font-family="Liberation Sans">4</text><path d="M568.35 101.00 L568.35 111.30" fill="none" stroke="#8a8a8a" stroke-width="1"/><text x="593.4" y="108.6" font-size="5.5" fill="#aaa" text-anchor="middle" font-family="Liberation Sans">5</text><path d="M618.76 101.00 L618.76 111.30" fill="none" stroke="#8a8a8a" stroke-width="1"/><text x="643.8" y="108.6" font-size="5.5" fill="#aaa" text-anchor="middle" font-family="Liberation Sans">6</text><path d="M669.17 101.00 L669.17 111.30" fill="none" stroke="#8a8a8a" stroke-width="1"/><text x="694.2" y="108.6" font-size="5.5" fill="#aaa" text-anchor="middle" font-family="Liberation Sans">7</text><path d="M719.58 101.00 L719.58 111.30" fill="none" stroke="#8a8a8a" stroke-width="1"/><text x="744.6" y="108.6" font-size="5.5" fill="#aaa" text-anchor="middle" font-family="Liberation Sans">8</text><path d="M769.99 101.00 L769.99 111.30" fill="none" stroke="#8a8a8a" stroke-width="1"/><path d="M305.00 161.80 L315.60 161.80" fill="none" stroke="#8a8a8a" stroke-width="1"/><path d="M799.20 161.80 L809.50 161.80" fill="none" stroke="#8a8a8a" stroke-width="1"/><path d="M305.00 212.10 L315.60 212.10" fill="none" stroke="#8a8a8a" stroke-width="1"/><path d="M799.20 212.10 L809.50 212.10" fill="none" stroke="#8a8a8a" stroke-width="1"/><path d="M305.00 262.40 L315.60 262.40" fill="none" stroke="#8a8a8a" stroke-width="1"/><path d="M799.20 262.40 L809.50 262.40" fill="none" stroke="#8a8a8a" stroke-width="1"/><path d="M305.00 312.70 L315.60 312.70" fill="none" stroke="#8a8a8a" stroke-width="1"/><path d="M799.20 312.70 L809.50 312.70" fill="none" stroke="#8a8a8a" stroke-width="1"/><path d="M305.00 363.00 L315.60 363.00" fill="none" stroke="#8a8a8a" stroke-width="1"/><path d="M799.20 363.00 L809.50 363.00" fill="none" stroke="#8a8a8a" stroke-width="1"/><path d="M305.00 413.30 L315.60 413.30" fill="none" stroke="#8a8a8a" stroke-width="1"/><path d="M799.20 413.30 L809.50 413.30" fill="none" stroke="#8a8a8a" stroke-width="1"/><path d="M305.00 463.60 L315.60 463.60" fill="none" stroke="#8a8a8a" stroke-width="1"/><path d="M799.20 463.60 L809.50 463.60" fill="none" stroke="#8a8a8a" stroke-width="1"/><path d="M305.00 513.90 L315.60 513.90" fill="none" stroke="#8a8a8a" stroke-width="1"/><path d="M799.20 513.90 L809.50 513.90" fill="none" stroke="#8a8a8a" stroke-width="1"/><path d="M305.00 564.20 L315.60 564.20" fill="none" stroke="#8a8a8a" stroke-width="1"/><path d="M799.20 564.20 L809.50 564.20" fill="none" stroke="#8a8a8a" stroke-width="1"/><text x="310.3" y="138.5" font-size="5.5" fill="#aaa" text-anchor="middle" font-family="Liberation Sans">A</text><text x="804.3" y="138.5" font-size="5.5" fill="#aaa" text-anchor="middle" font-family="Liberation Sans">A</text><text x="310.3" y="188.8" font-size="5.5" fill="#aaa" text-anchor="middle" font-family="Liberation Sans">B</text><text x="804.3" y="188.8" font-size="5.5" fill="#aaa" text-anchor="middle" font-family="Liberation Sans">B</text><text x="310.3" y="239.1" font-size="5.5" fill="#aaa" text-anchor="middle" font-family="Liberation Sans">C</text><text x="804.3" y="239.1" font-size="5.5" fill="#aaa" text-anchor="middle" font-family="Liberation Sans">C</text><text x="310.3" y="289.4" font-size="5.5" fill="#aaa" text-anchor="middle" font-family="Liberation Sans">D</text><text x="804.3" y="289.4" font-size="5.5" fill="#aaa" text-anchor="middle" font-family="Liberation Sans">D</text><text x="310.3" y="339.7" font-size="5.5" fill="#aaa" text-anchor="middle" font-family="Liberation Sans">E</text><text x="804.3" y="339.7" font-size="5.5" fill="#aaa" text-anchor="middle" font-family="Liberation Sans">E</text><text x="310.3" y="390.0" font-size="5.5" fill="#aaa" text-anchor="middle" font-family="Liberation Sans">F</text><text x="804.3" y="390.0" font-size="5.5" fill="#aaa" text-anchor="middle" font-family="Liberation Sans">F</text><text x="310.3" y="440.3" font-size="5.5" fill="#aaa" text-anchor="middle" font-family="Liberation Sans">G</text><text x="804.3" y="440.3" font-size="5.5" fill="#aaa" text-anchor="middle" font-family="Liberation Sans">G</text><text x="310.3" y="490.6" font-size="5.5" fill="#aaa" text-anchor="middle" font-family="Liberation Sans">H</text><text x="804.3" y="490.6" font-size="5.5" fill="#aaa" text-anchor="middle" font-family="Liberation Sans">H</text><text x="310.3" y="540.9" font-size="5.5" fill="#aaa" text-anchor="middle" font-family="Liberation Sans">I</text><text x="804.3" y="540.9" font-size="5.5" fill="#aaa" text-anchor="middle" font-family="Liberation Sans">I</text><text x="310.3" y="591.2" font-size="5.5" fill="#aaa" text-anchor="middle" font-family="Liberation Sans">J</text><text x="804.3" y="591.2" font-size="5.5" fill="#aaa" text-anchor="middle" font-family="Liberation Sans">J</text><text x="373.8" y="126" font-size="7" fill="#111" font-weight="bold" font-family="Liberation Sans" transform="translate(373.8 0) scale(0.92 1) translate(-373.8 0)">VCC</text><text x="391.8" y="136.5" font-size="7" fill="#222" font-weight="normal" font-family="Liberation Sans" transform="translate(391.8 0) scale(0.95 1) translate(-391.8 0)">5.0V</text><text x="352.8" y="163.6" font-size="7.6" fill="#3040c0" font-weight="bold" font-family="Liberation Sans" transform="translate(352.8 0) scale(0.92 1) translate(-352.8 0)">Z</text><text x="409.6" y="163.6" font-size="7.6" fill="#3040c0" font-weight="bold" font-family="Liberation Sans" transform="translate(409.6 0) scale(0.92 1) translate(-409.6 0)">Y</text><text x="466" y="163.6" font-size="7.6" fill="#3040c0" font-weight="bold" font-family="Liberation Sans" transform="translate(466 0) scale(0.92 1) translate(-466 0)">X</text><text x="517.5" y="163.6" font-size="7.6" fill="#3040c0" font-weight="bold" font-family="Liberation Sans" transform="translate(517.5 0) scale(0.92 1) translate(-517.5 0)">W</text><text x="746.5" y="154" font-size="7.3" fill="#111" font-weight="bold" font-family="Liberation Sans" transform="translate(746.5 0) scale(1.0 1) translate(-746.5 0)">U7</text><text x="760.2" y="243.8" font-size="7.4" fill="#2230b0" font-weight="bold" font-family="Liberation Sans" transform="translate(760.2 0) scale(0.9 1) translate(-760.2 0)">120&#937;</text><text x="575" y="242.2" font-size="8.5" fill="#333" font-weight="normal" font-family="Liberation Sans" transform="translate(575 0) scale(1.005 1) translate(-575 0)">Austin P., 6th Period DE</text><text x="575" y="251.7" font-size="8.5" fill="#333" font-weight="normal" font-family="Liberation Sans" transform="translate(575 0) scale(1.005 1) translate(-575 0)">7 Segment BCD</text></svg>
</div>
<div class="a" style="left:1253px;top:60px;width:11px;height:550px;background:#f0f0f0"></div>
<div class="a" style="left:1253px;top:70px;width:11px;height:291px;background:#cdcdcd"></div>
<svg class="a" style="left:1255px;top:63px;" width="7" height="5" viewBox="0 0 7 5"><path d="M0.5 4L3.5 1L6.5 4" fill="none" stroke="#555" stroke-width="1.2"/></svg>
<svg class="a" style="left:1255px;top:602px;" width="7" height="5" viewBox="0 0 7 5"><path d="M0.5 1L3.5 4L6.5 1" fill="none" stroke="#555" stroke-width="1.2"/></svg>
<div class="a" style="left:1264px;top:59px;width:1px;height:568px;background:#e0e0e0"></div>
<div class="a" style="left:1265px;top:60px;width:14px;height:283px;background:#f3f3f3;border-left:1px solid #ddd;border-right:1px solid #ddd"></div>
<svg class="a" style="left:1267px;top:63px;" width="10" height="10" viewBox="0 0 10 10"><rect x="1.5" y="1.5" width="7" height="7" fill="none" stroke="#aaa"/><path d="M3.5 3H6.5L5 5L6.5 7H3.5" stroke="#777" fill="none"/></svg>
<svg class="a" style="left:1267px;top:76px;" width="10" height="10" viewBox="0 0 10 10"><rect x="1" y="1" width="8" height="3" fill="#8e8e8e"/><path d="M1 7H9M2 5V8M8 5V8" stroke="#aaa"/></svg>
<svg class="a" style="left:1267px;top:88px;" width="10" height="10" viewBox="0 0 10 10"><rect x="1.5" y="1.5" width="3" height="3" fill="none" stroke="#999"/><rect x="5.5" y="1.5" width="3" height="3" fill="none" stroke="#999"/><path d="M1 7.5H9" stroke="#999"/></svg>
<svg class="a" style="left:1267px;top:100px;" width="10" height="10" viewBox="0 0 10 10"><rect x="1.5" y="1.5" width="7" height="7" fill="none" stroke="#aaa"/><path d="M2 3.5H8M2 5.5H8" stroke="#999"/></svg>
<svg class="a" style="left:1267px;top:112px;" width="10" height="10" viewBox="0 0 10 10"><path d="M1 5L3 2L5 5L7 2L9 5M1 7.5H9" stroke="#888" fill="none"/></svg>
<svg class="a" style="left:1267px;top:124px;" width="10" height="10" viewBox="0 0 10 10"><rect x="1" y="1" width="6" height="5" fill="#888"/><path d="M8.5 1V9M1 8H9" stroke="#999"/></svg>
<svg class="a" style="left:1267px;top:137px;" width="10" height="10" viewBox="0 0 10 10"><rect x="1" y="1" width="8" height="4" fill="#8a8a8a"/><path d="M1 7.5H9" stroke="#999"/></svg>
<svg class="a" style="left:1267px;top:149px;" width="10" height="10" viewBox="0 0 10 10"><rect x="1" y="1" width="8" height="3" fill="#8e8e8e"/><path d="M1 7H9M2 5V8M8 5V8" stroke="#aaa"/></svg>
<svg class="a" style="left:1267px;top:161px;" width="10" height="10" viewBox="0 0 10 10"><rect x="1" y="1" width="8" height="5" fill="#8a8a8a"/><path d="M1 8H9" stroke="#aaa"/></svg>
<svg class="a" style="left:1267px;top:174px;" width="10" height="10" viewBox="0 0 10 10"><rect x="1" y="1" width="8" height="8" fill="#888"/></svg>
<svg class="a" style="left:1267px;top:186px;" width="10" height="10" viewBox="0 0 10 10"><rect x="1" y="1" width="6" height="5" fill="#888"/><path d="M8.5 1V9M1 8H9" stroke="#999"/></svg>
<svg class="a" style="left:1267px;top:199px;" width="10" height="10" viewBox="0 0 10 10"><rect x="1" y="1" width="8" height="5" fill="#8a8a8a"/><path d="M1 8H9" stroke="#aaa"/></svg>
<svg class="a" style="left:1267px;top:211px;" width="10" height="10" viewBox="0 0 10 10"><rect x="1" y="1" width="8" height="5" fill="#8a8a8a"/><path d="M1 8H9" stroke="#aaa"/></svg>
<svg class="a" style="left:1267px;top:223px;" width="10" height="10" viewBox="0 0 10 10"><rect x="1" y="1" width="6" height="5" fill="#888"/><path d="M8.5 1V9M1 8H9" stroke="#999"/></svg>
<svg class="a" style="left:1267px;top:236px;" width="10" height="10" viewBox="0 0 10 10"><rect x="1" y="1" width="8" height="3" fill="#8e8e8e"/><path d="M1 7H9M2 5V8M8 5V8" stroke="#aaa"/></svg>
<svg class="a" style="left:1267px;top:249px;" width="10" height="10" viewBox="0 0 10 10"><rect x="1.5" y="1.5" width="7" height="7" fill="none" stroke="#999"/><path d="M5 1V9M1 5H9" stroke="#999"/></svg>
<svg class="a" style="left:1267px;top:262px;" width="10" height="10" viewBox="0 0 10 10"><rect x="1.5" y="1.5" width="7" height="7" fill="none" stroke="#999"/><path d="M5 1V9M1 5H9" stroke="#999"/></svg>
<div class="a" style="left:1266px;top:275px;width:12px;height:1px;background:#ddd"></div>
<div class="a" style="left:1266px;top:304px;width:12px;height:1px;background:#ddd"></div>
<div class="a" style="left:1266px;top:325px;width:12px;height:1px;background:#ddd"></div>
<svg class="a" style="left:1267px;top:289px;" width="10" height="10" viewBox="0 0 10 10"><rect x="1" y="1" width="8" height="8" fill="#8a8a8a"/></svg>
<svg class="a" style="left:1267px;top:310px;" width="10" height="10" viewBox="0 0 10 10"><path d="M1 5L5 3L9 5M3 7L7 7" stroke="#999" fill="none"/></svg>
<svg class="a" style="left:1267px;top:330px;" width="10" height="10" viewBox="0 0 10 10"><circle cx="3" cy="6.5" r="2" fill="none" stroke="#777"/><path d="M4 5L8 1M5 8H9" stroke="#777"/></svg>
<div class="a" style="left:66px;top:610px;width:1187px;height:1px;background:#fff"></div>
<div class="a" style="left:68px;top:611px;width:30px;height:15px;background:#f7f7f7;border:1px solid #c4c4c4;border-top:none"></div>
<svg class="a" style="left:69px;top:613px;" width="10" height="11" viewBox="0 0 10 11"><path d="M0.5 0.5H6.5L9.5 3.5V10.5H0.5Z" fill="#fff" stroke="#333"/><path d="M1 8L3 3L5 7L7 2" stroke="#c33" fill="none"/></svg>
<div class="a t" style="left:79.5px;top:613.00px;font-size:8px;line-height:12px;color:#555;font-weight:normal;transform:scaleX(0.7498);">BCD7</div>
<svg class="a" style="left:1257px;top:615px;" width="8" height="8" viewBox="0 0 8 8"><path d="M0 0L4 4L8 0M0 8L8 0" stroke="#3a3a90" stroke-width="1.3" fill="none"/><rect x="1" y="5" width="6" height="3" fill="#8080c0"/></svg>
<div class="a" style="left:0px;top:626px;width:1280px;height:1px;background:#c8c8c8"></div>
<div class="a" style="left:0px;top:627px;width:1280px;height:1px;background:#fdfdfd"></div>
<div class="a" style="left:4px;top:629px;width:7px;height:8px;background:#fafafa;border:1px solid #ccc"></div>
<svg class="a" style="left:5.5px;top:631px;" width="4" height="4" viewBox="0 0 4 4"><path d="M0 0L4 4M4 0L0 4" stroke="#111" stroke-width="1"/></svg>
<div class="a" style="left:4px;top:637px;width:7px;height:7px;background:#fafafa;border:1px solid #ccc"></div>
<svg class="a" style="left:6px;top:639px;" width="3" height="3" viewBox="0 0 3 3"><path d="M0 0L2 1.5L0 3" stroke="#666" fill="none" stroke-width="0.7"/></svg>
<div class="a" style="left:1px;top:644px;width:13px;height:40px;background:#c9d9ea"></div>
<div class="a t" style="left:1.5px;top:684px;font-size:8px;line-height:12px;color:#333;transform-origin:0 0;transform:rotate(-90deg) scaleX(0.86);">Spreadsheet</div>
<div class="a" style="left:15px;top:629px;width:1264px;height:45px;background:#fff;border-left:1px solid #9a9a9a;border-top:1px solid #bbb;border-right:1px solid #ccc;border-bottom:1px solid #aaa"></div>
<div class="a t" style="left:27.5px;top:631.20px;font-size:8px;line-height:12px;color:#1a1a1a;font-weight:normal;transform:scaleX(0.8523);">Multisim</div>
<div class="a t" style="left:56.5px;top:631.20px;font-size:8px;line-height:12px;color:#888;font-weight:normal;transform:scaleX(0.9385);">-</div>
<div class="a t" style="left:64.5px;top:631.20px;font-size:8px;line-height:12px;color:#1a1a1a;font-weight:normal;transform:scaleX(0.8425);">Monday, February 3, 2020, 10:50:09 PM</div>
<div class="a t" style="left:27.5px;top:642.40px;font-size:8px;line-height:12px;color:#1a1a1a;font-weight:normal;transform:scaleX(0.8739);">Probes do not plot to the Grapher for interactive simulation. Connect an oscilloscope or run a transient simulation to see Grapher data.</div>
<div class="a t" style="left:27.5px;top:653.60px;font-size:8px;line-height:12px;color:#1a1a1a;font-weight:normal;transform:scaleX(0.8739);">Probes do not plot to the Grapher for interactive simulation. Connect an oscilloscope or run a transient simulation to see Grapher data.</div>
<div class="a" style="left:15px;top:673px;width:24px;height:12px;background:#fdfdfd;border-bottom:1px solid #aaa;border-right:1px solid #ccc"></div>
<div class="a t" style="left:17.5px;top:673.60px;font-size:8px;line-height:12px;color:#222;font-weight:normal;transform:scaleX(0.7498);">Results</div>
<div class="a" style="left:39px;top:674px;width:19.5px;height:11px;background:#f0f0f0;border:1px solid #aaa;border-top:none"></div>
<div class="a t" style="left:40.5px;top:673.00px;font-size:8px;line-height:12px;color:#222;font-weight:normal;transform:scaleX(0.9423);">Nets</div>
<div class="a" style="left:59px;top:674px;width:38.5px;height:11px;background:#f0f0f0;border:1px solid #aaa;border-top:none"></div>
<div class="a t" style="left:60.5px;top:673.00px;font-size:8px;line-height:12px;color:#222;font-weight:normal;transform:scaleX(0.7606);">Components</div>
<div class="a" style="left:98px;top:674px;width:41px;height:11px;background:#f0f0f0;border:1px solid #aaa;border-top:none"></div>
<div class="a t" style="left:99.5px;top:673.00px;font-size:8px;line-height:12px;color:#222;font-weight:normal;transform:scaleX(0.7430);">Copper layers</div>
<div class="a" style="left:140px;top:674px;width:32px;height:11px;background:#f0f0f0;border:1px solid #aaa;border-top:none"></div>
<div class="a t" style="left:141.5px;top:673.00px;font-size:8px;line-height:12px;color:#222;font-weight:normal;transform:scaleX(0.7497);">Simulation</div>
<div class="a" style="left:0px;top:685px;width:1280px;height:1px;background:#d8d8d8"></div>
<div class="a" style="left:0px;top:686px;width:1280px;height:11px;background:#f0f0f0"></div>
<div class="a" style="left:1087px;top:691px;width:2px;height:1px;background:#555"></div>
<div class="a t" style="left:1138px;top:686.00px;font-size:8px;line-height:12px;color:#222;font-weight:normal;transform:scaleX(0.8339);">BCD7: Simulating... Tran: 0.300 s</div>
<div class="a" style="left:1260px;top:690px;width:2px;height:4px;background:#2ebd2e"></div>
<div class="a" style="left:1263px;top:690px;width:2px;height:4px;background:#2ebd2e"></div>
<div class="a" style="left:1266px;top:690px;width:2px;height:4px;background:#9be09b"></div>
<div class="a" style="left:1269px;top:690px;width:2px;height:4px;background:#9be09b"></div>
<div class="a" style="left:1272px;top:690px;width:2px;height:4px;background:#2ebd2e"></div>
<div class="a" style="left:1275px;top:690px;width:2px;height:4px;background:#2ebd2e"></div>
<div class="a" style="left:0;top:697px;width:1280px;height:23px;background:linear-gradient(90deg,#2e1c1c 0%,#2a1b1f 18%,#2a1d24 24%,#2c1f30 40%,#2d2035 42.5%,#3c2421 47.5%,#2b1f20 53%,#2d2230 60%,#24222a 68%,#2a2424 73%,#22242c 80%,#1e2a26 81.5%,#223038 88%,#1e2a30 100%)"></div>
<div class="a" style="left:0px;top:697px;width:28px;height:23px;background:#2e1c1c"></div>
<svg class="a" style="left:10px;top:703px;" width="9" height="9" viewBox="0 0 9 9"><path d="M0 1.2L3.8 0.6V4.2H0ZM4.4 0.5L9 0V4.2H4.4ZM0 4.8H3.8V8.4L0 7.8ZM4.4 4.8H9V9L4.4 8.5Z" fill="#fff"/></svg>
<div class="a" style="left:28px;top:697px;width:201px;height:23px;background:#f0f0f0"></div>
<svg class="a" style="left:35px;top:702px;" width="11" height="12" viewBox="0 0 11 12"><circle cx="6.5" cy="4.5" r="3.5" fill="none" stroke="#222" stroke-width="1.1"/><path d="M4 7L0.8 10.5" stroke="#222" stroke-width="1.2"/></svg>
<div class="a t" style="left:54px;top:703.00px;font-size:9px;line-height:12px;color:#333;font-weight:normal;transform:scaleX(0.9366);">Type here to search</div>
<svg class="a" style="left:237px;top:703px;" width="11" height="11" viewBox="0 0 11 11"><circle cx="5.5" cy="5.5" r="4.3" fill="none" stroke="#fff" stroke-width="1.3"/></svg>
<svg class="a" style="left:265px;top:703px;" width="12" height="11" viewBox="0 0 12 11"><rect x="2.5" y="2.5" width="7" height="6" fill="none" stroke="#ddd"/><path d="M0.5 1V10M11.5 1V10" stroke="#ddd"/></svg>
<svg class="a" style="left:294px;top:702px;" width="12" height="12" viewBox="0 0 12 12"><path d="M11 7H3.5A3 3 0 0 0 9.5 9.5V11.5A5.5 5.5 0 0 1 0.5 6A5.5 5.5 0 0 1 11 5Z" fill="#1e8ae0"/></svg>
<svg class="a" style="left:322px;top:702px;" width="13" height="12" viewBox="0 0 13 12"><path d="M0.5 1.5H5L6 3H12.5V11.5H0.5Z" fill="#f2c94c"/><rect x="0.5" y="5" width="12" height="6.5" fill="#f8d774"/><rect x="3" y="7" width="7" height="4" fill="#2a6cc0"/></svg>
<svg class="a" style="left:351px;top:702px;" width="13" height="13" viewBox="0 0 13 13"><circle cx="6.5" cy="6.5" r="6" fill="#db4437"/><path d="M6.5 6.5L12.5 6.5A6 6 0 0 1 3.5 11.7Z" fill="#0f9d58"/><path d="M6.5 6.5L3.5 11.7A6 6 0 0 1 1.3 3.5Z" fill="#f4c20d"/><circle cx="6.5" cy="6.5" r="2.8" fill="#fff"/><circle cx="6.5" cy="6.5" r="2.1" fill="#4285f4"/></svg>
<svg class="a" style="left:379px;top:702px;" width="13" height="13" viewBox="0 0 13 13"><circle cx="6.5" cy="6.5" r="5.5" fill="#cfcfcf"/><path d="M3 4L9 9M4 9L9 4" stroke="#999"/></svg>
<svg class="a" style="left:408px;top:702px;" width="13" height="12" viewBox="0 0 13 12"><rect x="3" y="1" width="9" height="7" fill="#e8e8e8" stroke="#999" stroke-width="0.5"/><rect x="0.5" y="4" width="9" height="7" fill="#fff" stroke="#888" stroke-width="0.5"/></svg>
<svg class="a" style="left:438px;top:702px;" width="13" height="13" viewBox="0 0 13 13"><circle cx="6.5" cy="6.5" r="6" fill="#1ed760"/><path d="M3 5Q7 3.5 10 5.5M3.5 7.3Q6.8 6.2 9.5 7.8M4 9.4Q6.5 8.6 8.8 9.8" stroke="#111" stroke-width="1" fill="none"/></svg>
<div class="a" style="left:460px;top:697px;width:29px;height:23px;background:#5a5458"></div>
<svg class="a" style="left:468px;top:702px;" width="13" height="12" viewBox="0 0 13 12"><rect x="0" y="0" width="13" height="12" fill="#6e6ea8"/><rect x="1" y="3" width="11" height="2" fill="#dde"/><rect x="1" y="7" width="5" height="2" fill="#dde"/><rect x="7" y="7" width="5" height="3" fill="#dde"/></svg>
<svg class="a" style="left:497px;top:702px;" width="13" height="13" viewBox="0 0 13 13"><path d="M6.5 0.5L12 3.5V9.5L6.5 12.5L1 9.5V3.5Z" fill="#3a3a3a" stroke="#c060c0"/><circle cx="6.5" cy="6.5" r="3" fill="none" stroke="#fff"/><path d="M6.5 3V6.5" stroke="#fff"/></svg>
<div class="a" style="left:319px;top:719px;width:20px;height:1px;background:#76b9ed"></div>
<div class="a" style="left:348px;top:719px;width:20px;height:1px;background:#76b9ed"></div>
<div class="a" style="left:435px;top:719px;width:20px;height:1px;background:#76b9ed"></div>
<div class="a" style="left:457px;top:719px;width:35px;height:1px;background:#76b9ed"></div>
<div class="a" style="left:489px;top:719px;width:29px;height:1px;background:#76b9ed"></div>
<svg class="a" style="left:1171px;top:704px;" width="9" height="6" viewBox="0 0 9 6"><path d="M0.5 5L4.5 1L8.5 5" fill="none" stroke="#ddd"/></svg>
<svg class="a" style="left:1184px;top:703px;" width="10" height="10" viewBox="0 0 10 10"><path d="M0.5 3.5H2.5L5 1V9L2.5 6.5H0.5Z" fill="none" stroke="#ddd"/><path d="M7 3Q8.5 5 7 7" stroke="#ddd" fill="none"/></svg>
<svg class="a" style="left:1199px;top:703px;" width="12" height="10" viewBox="0 0 12 10"><rect x="2.5" y="1.5" width="9" height="6" fill="none" stroke="#ddd"/><path d="M0.5 3V9H7" stroke="#ddd" fill="none"/></svg>
<div class="a t" style="left:1215.5px;top:697.30px;font-size:8.6px;line-height:12px;color:#fff;font-weight:bold;transform:scaleX(0.7743);opacity:0.92">11:06 PM</div>
<div class="a t" style="left:1216px;top:708.00px;font-size:8.6px;line-height:12px;color:#fff;font-weight:bold;transform:scaleX(0.8216);opacity:0.92">2/3/2020</div>
<svg class="a" style="left:1255px;top:703px;" width="12" height="11" viewBox="0 0 12 11"><path d="M0.5 0.5H11.5V8.5H5L2.5 10.5V8.5H0.5Z" fill="none" stroke="#eee"/></svg>
<div class="a" style="left:1277px;top:697px;width:1px;height:23px;background:#555"></div>
</body></html>
